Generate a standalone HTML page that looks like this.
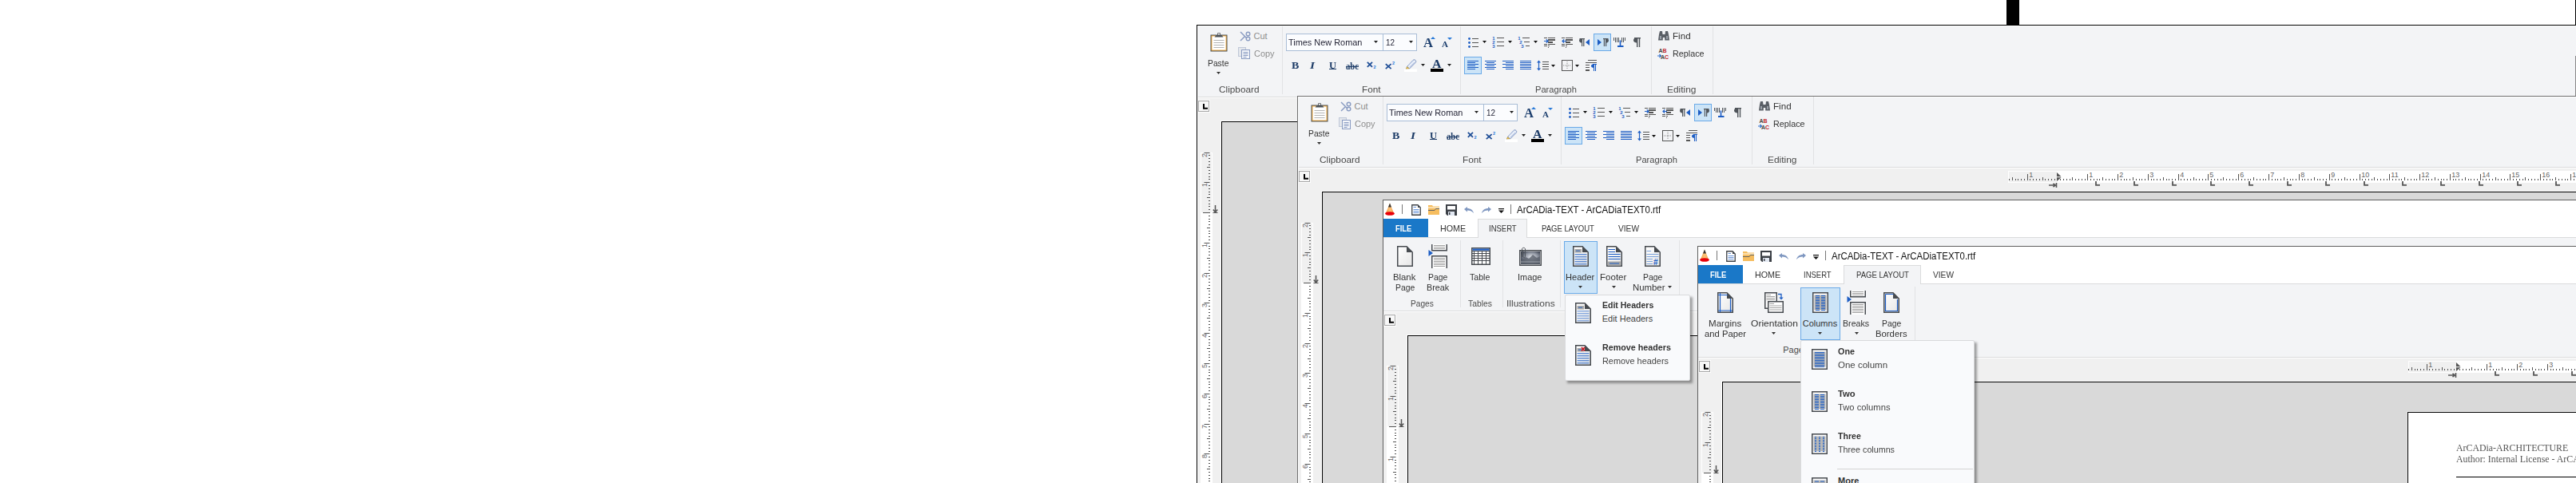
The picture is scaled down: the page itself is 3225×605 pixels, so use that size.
<!DOCTYPE html><html><head><meta charset="utf-8"><style>html,body{margin:0;padding:0;}body{width:3225px;height:605px;overflow:hidden;position:relative;background:#fff;font-family:"Liberation Sans",sans-serif;}.a{position:absolute;}.t{position:absolute;white-space:nowrap;line-height:normal;}</style></head><body>
<div class="a" style="left:2512px;top:0px;width:16px;height:31px;background:#000;"></div>
<div class="a" style="left:3224px;top:0px;width:1px;height:31px;background:#000;"></div>
<div class="a" style="left:1498px;top:31px;width:1727px;height:574px;background:#000;"></div>
<div class="a" style="left:1499px;top:32px;width:1726px;height:573px;background:#fff;"></div>
<div class="a" style="left:1500px;top:33px;width:1725px;height:88px;background:#f3f4f6;"></div>
<div class="a" style="left:1500px;top:121px;width:1725px;height:1px;background:#dadbdc;"></div>
<div class="a" style="left:1500px;top:122px;width:1725px;height:483px;background:#f0f0f0;"></div>
<div class="a" style="left:1500px;top:122px;width:1725px;height:1px;background:#fff;"></div>
<svg class="a" style="left:1515px;top:41px;" width="22" height="24" viewBox="0 0 22 24"><rect x="0.5" y="2.5" width="21" height="21" fill="#4d5257"/><rect x="1.5" y="3.5" width="19" height="19" fill="#f6b24a"/><rect x="2.5" y="4.5" width="17" height="17" fill="#fff"/><path d="M5.5 5.5H16.5L14.5 3H12.8V0.3H9.2V3H7.5Z" fill="#4d5257"/><rect x="10" y="1" width="2" height="1.5" fill="#fff"/><path d="M4.5 9.5H17.5M4.5 12.5H17.5M4.5 15.5H17.5M4.5 18.5H17.5" stroke="#b4b4b4" stroke-width="1"/></svg>
<div class="t" style="left:1512.40px;top:72.95px;font-size:11px;color:#333;font-family:'Liberation Sans', sans-serif;transform:scaleX(0.9376);transform-origin:0 0;">Paste</div>
<svg class="a" style="left:1523px;top:90px;" width="5" height="3" viewBox="0 0 5 3"><path d="M0 0H5L2.5 3Z" fill="#333"/></svg>
<svg class="a" style="left:1552px;top:39px;" width="14" height="13" viewBox="0 0 14 13"><path d="M1 1L9 9M1 12L7 6" stroke="#8a9cc2" stroke-width="1.5" fill="none"/><circle cx="10.5" cy="3.5" r="2.3" stroke="#8a9cc2" stroke-width="1.4" fill="none"/><circle cx="10.5" cy="9.5" r="2.3" stroke="#8a9cc2" stroke-width="1.4" fill="none"/></svg>
<div class="t" style="left:1569.50px;top:39.05px;font-size:11px;color:#8e8e8e;font-family:'Liberation Sans', sans-serif;">Cut</div>
<svg class="a" style="left:1550px;top:59px;" width="15" height="15" viewBox="0 0 15 15"><rect x="0.5" y="0.5" width="9" height="11" fill="#e4e7ec" stroke="#c0c8d8"/><rect x="4.5" y="3.5" width="10" height="11" fill="#f4f6fa" stroke="#8a9cc2"/><path d="M6.5 6.5H12.5M6.5 8.5H12.5M6.5 10.5H12.5M6.5 12.5H10.5" stroke="#8a9cc2"/></svg>
<div class="t" style="left:1569.50px;top:60.64px;font-size:11px;color:#8e8e8e;font-family:'Liberation Sans', sans-serif;transform:scaleX(0.9927);transform-origin:0 0;">Copy</div>
<div class="a" style="left:1605px;top:33px;width:1px;height:85px;background:#e1e2e4;"></div>
<div class="a" style="left:1828px;top:33px;width:1px;height:85px;background:#e1e2e4;"></div>
<div class="a" style="left:2067px;top:33px;width:1px;height:85px;background:#e1e2e4;"></div>
<div class="a" style="left:2144px;top:33px;width:1px;height:85px;background:#e1e2e4;"></div>
<div class="t" style="left:1526.25px;top:106.05px;font-size:11px;color:#4a4a4a;font-family:'Liberation Sans', sans-serif;transform:scaleX(1.0723);transform-origin:0 0;">Clipboard</div>
<div class="t" style="left:1704.70px;top:106.05px;font-size:11px;color:#4a4a4a;font-family:'Liberation Sans', sans-serif;transform:scaleX(1.0712);transform-origin:0 0;">Font</div>
<div class="t" style="left:1921.70px;top:106.05px;font-size:11px;color:#4a4a4a;font-family:'Liberation Sans', sans-serif;transform:scaleX(1.0116);transform-origin:0 0;">Paragraph</div>
<div class="t" style="left:2087.45px;top:106.05px;font-size:11px;color:#4a4a4a;font-family:'Liberation Sans', sans-serif;transform:scaleX(1.0845);transform-origin:0 0;">Editing</div>
<div class="a" style="left:1610px;top:42px;width:164px;height:22px;background:#fbfcfe;border:1px solid #a9bdd6;box-sizing:border-box;"></div>
<div class="a" style="left:1731px;top:42px;width:1px;height:22px;background:#a9bdd6;"></div>
<div class="t" style="left:1613.00px;top:47.25px;font-size:11px;color:#1e1e30;font-family:'Liberation Sans', sans-serif;transform:scaleX(0.9922);transform-origin:0 0;">Times New Roman</div>
<div class="t" style="left:1735.00px;top:47.25px;font-size:11px;color:#1e1e30;font-family:'Liberation Sans', sans-serif;transform:scaleX(0.8980);transform-origin:0 0;">12</div>
<svg class="a" style="left:1720px;top:51px;" width="5" height="3" viewBox="0 0 5 3"><path d="M0 0H5L2.5 3Z" fill="#222"/></svg>
<svg class="a" style="left:1763.5px;top:51px;" width="5" height="3" viewBox="0 0 5 3"><path d="M0 0H5L2.5 3Z" fill="#222"/></svg>
<div class="t" style="left:1782.00px;top:43.55px;font-size:17px;color:#1d3f6e;font-family:'Liberation Serif', serif;font-weight:bold;transform:scaleX(0.9771);transform-origin:0 0;">A</div>
<svg class="a" style="left:1791px;top:46px;" width="6" height="3" viewBox="0 0 6 3"><path d="M0 3L3 0L6 3Z" fill="#2a7ad8"/></svg>
<div class="t" style="left:1805.00px;top:48.90px;font-size:11px;color:#1d3f6e;font-family:'Liberation Serif', serif;font-weight:bold;transform:scaleX(1.0079);transform-origin:0 0;">A</div>
<svg class="a" style="left:1812px;top:47px;" width="6" height="3" viewBox="0 0 6 3"><path d="M0 0L3 3L6 0Z" fill="#2a7ad8"/></svg>
<div class="t" style="left:1617.00px;top:73.97px;font-size:13.5px;color:#1b3a66;font-family:'Liberation Serif', serif;font-weight:bold;transform:scaleX(1.0333);transform-origin:0 0;">B</div>
<div class="t" style="left:1640.00px;top:73.97px;font-size:13.5px;color:#1b3a66;font-family:'Liberation Serif', serif;font-weight:bold;transform:scaleX(1.1429);transform-origin:0 0;font-style:italic;">I</div>
<div class="t" style="left:1664.00px;top:73.97px;font-size:13.5px;color:#1b3a66;font-family:'Liberation Serif', serif;font-weight:bold;transform:scaleX(0.9231);transform-origin:0 0;">U</div>
<div class="a" style="left:1664px;top:86px;width:9px;height:1px;background:#1b3a66;"></div>
<div class="t" style="left:1685.00px;top:75.42px;font-size:13px;color:#1b3a66;font-family:'Liberation Serif', serif;font-weight:bold;transform:scaleX(0.8205);transform-origin:0 0;">abc</div>
<div class="a" style="left:1685px;top:83px;width:16px;height:1px;background:#1b3a66;"></div>
<svg class="a" style="left:1711px;top:77px;" width="13" height="9" viewBox="0 0 13 9"><path d="M0.8 0.8L7 6.8M7 0.8L0.8 6.8" stroke="#1f4e96" stroke-width="1.8"/><text x="8.6" y="8.8" font-size="5.5" font-weight="bold" fill="#2a7ad8" font-family="Liberation Sans">2</text></svg>
<svg class="a" style="left:1734px;top:77px;" width="13" height="10" viewBox="0 0 13 10"><path d="M0.8 3.2L7.6 9.2M7.6 3.2L0.8 9.2" stroke="#1f4e96" stroke-width="1.8"/><text x="9" y="4.2" font-size="5.5" font-weight="bold" fill="#2a7ad8" font-family="Liberation Sans">2</text></svg>
<svg class="a" style="left:1758px;top:74px;" width="16" height="16" viewBox="0 0 16 16"><path d="M3.5 9.5L11 1.5C12 0.5 13 0.5 14 1.5C15 2.5 15 3.5 14 4.5L6.5 12Z" fill="#e8eef8" stroke="#6b85b8" stroke-width="0.9"/><path d="M5 8L11 2M7 10L13 4" stroke="#a9bde0" stroke-width="0.8"/><path d="M3.5 9.5L6.5 12L2 12.5Z" fill="#f0c040" stroke="#8a7a50" stroke-width="0.5"/><rect x="0" y="12.5" width="16" height="3.5" fill="#fff"/></svg>
<svg class="a" style="left:1779px;top:80px;" width="5" height="3" viewBox="0 0 5 3"><path d="M0 0H5L2.5 3Z" fill="#222"/></svg>
<div class="t" style="left:1793.00px;top:71.64px;font-size:15px;color:#1b3a66;font-family:'Liberation Serif', serif;font-weight:bold;transform:scaleX(1.0620);transform-origin:0 0;">A</div>
<div class="a" style="left:1791px;top:86px;width:16px;height:4px;background:#000;"></div>
<svg class="a" style="left:1812px;top:80px;" width="5" height="3" viewBox="0 0 5 3"><path d="M0 0H5L2.5 3Z" fill="#222"/></svg>
<svg class="a" style="left:1838px;top:47px;" width="3" height="3" viewBox="0 0 3 3"><circle cx="1.5" cy="1.5" r="1.4" fill="#1e5ec4"/></svg>
<div class="a" style="left:1843px;top:48px;width:8px;height:1px;background:#555;"></div>
<svg class="a" style="left:1838px;top:52px;" width="3" height="3" viewBox="0 0 3 3"><circle cx="1.5" cy="1.5" r="1.4" fill="#1e5ec4"/></svg>
<div class="a" style="left:1843px;top:53px;width:8px;height:1px;background:#555;"></div>
<svg class="a" style="left:1838px;top:57px;" width="3" height="3" viewBox="0 0 3 3"><circle cx="1.5" cy="1.5" r="1.4" fill="#1e5ec4"/></svg>
<div class="a" style="left:1843px;top:58px;width:8px;height:1px;background:#555;"></div>
<svg class="a" style="left:1856px;top:51px;" width="5" height="3" viewBox="0 0 5 3"><path d="M0 0H5L2.5 3Z" fill="#111"/></svg>
<svg class="a" style="left:1868px;top:45px;" width="5" height="6" viewBox="0 0 5 6"><text x="0.3" y="5.3" font-size="6" font-weight="bold" fill="#1e5ec4" font-family="Liberation Sans">1</text></svg>
<div class="a" style="left:1874px;top:47px;width:9px;height:1px;background:#555;"></div>
<svg class="a" style="left:1868px;top:50px;" width="5" height="6" viewBox="0 0 5 6"><text x="0.3" y="5.3" font-size="6" font-weight="bold" fill="#1e5ec4" font-family="Liberation Sans">2</text></svg>
<div class="a" style="left:1874px;top:52px;width:9px;height:1px;background:#555;"></div>
<svg class="a" style="left:1868px;top:55px;" width="5" height="6" viewBox="0 0 5 6"><text x="0.3" y="5.3" font-size="6" font-weight="bold" fill="#1e5ec4" font-family="Liberation Sans">3</text></svg>
<div class="a" style="left:1874px;top:57px;width:9px;height:1px;background:#555;"></div>
<svg class="a" style="left:1888px;top:51px;" width="5" height="3" viewBox="0 0 5 3"><path d="M0 0H5L2.5 3Z" fill="#111"/></svg>
<svg class="a" style="left:1900px;top:45px;" width="5" height="6" viewBox="0 0 5 6"><text x="0.3" y="5.3" font-size="6" font-weight="bold" fill="#1e5ec4" font-family="Liberation Sans">1</text></svg>
<div class="a" style="left:1906px;top:47px;width:9px;height:1px;background:#555;"></div>
<svg class="a" style="left:1902px;top:50px;" width="5" height="6" viewBox="0 0 5 6"><text x="0.3" y="5.3" font-size="6" font-weight="bold" fill="#1e5ec4" font-family="Liberation Sans">2</text></svg>
<div class="a" style="left:1908px;top:52px;width:7px;height:1px;background:#555;"></div>
<svg class="a" style="left:1904px;top:55px;" width="5" height="6" viewBox="0 0 5 6"><text x="0.3" y="5.3" font-size="6" font-weight="bold" fill="#1e5ec4" font-family="Liberation Sans">3</text></svg>
<div class="a" style="left:1910px;top:57px;width:5px;height:1px;background:#555;"></div>
<svg class="a" style="left:1920px;top:51px;" width="5" height="3" viewBox="0 0 5 3"><path d="M0 0H5L2.5 3Z" fill="#111"/></svg>
<div class="a" style="left:1933px;top:47px;width:4px;height:1px;background:#555;"></div>
<div class="a" style="left:1938px;top:47px;width:9px;height:1px;background:#555;"></div>
<div class="a" style="left:1938px;top:49px;width:9px;height:2px;background:#555;"></div>
<div class="a" style="left:1938px;top:52px;width:6px;height:2px;background:#555;"></div>
<div class="a" style="left:1933px;top:55px;width:4px;height:1px;background:#555;"></div>
<div class="a" style="left:1938px;top:55px;width:9px;height:1px;background:#555;"></div>
<div class="a" style="left:1933px;top:57px;width:4px;height:1px;background:#555;"></div>
<div class="a" style="left:1938px;top:57px;width:2px;height:1px;background:#555;"></div>
<div class="a" style="left:1938px;top:59px;width:1px;height:1px;background:#555;"></div>
<svg class="a" style="left:1933px;top:49px;" width="6" height="5" viewBox="0 0 6 5"><path d="M0 2.5H5M2.8 0.3L5 2.5L2.8 4.7" stroke="#1e5ec4" stroke-width="1.2" fill="none"/></svg>
<div class="a" style="left:1955px;top:47px;width:4px;height:1px;background:#555;"></div>
<div class="a" style="left:1960px;top:47px;width:9px;height:1px;background:#555;"></div>
<div class="a" style="left:1960px;top:49px;width:9px;height:2px;background:#555;"></div>
<div class="a" style="left:1960px;top:52px;width:6px;height:2px;background:#555;"></div>
<div class="a" style="left:1955px;top:55px;width:4px;height:1px;background:#555;"></div>
<div class="a" style="left:1960px;top:55px;width:9px;height:1px;background:#555;"></div>
<div class="a" style="left:1955px;top:57px;width:4px;height:1px;background:#555;"></div>
<div class="a" style="left:1960px;top:57px;width:2px;height:1px;background:#555;"></div>
<div class="a" style="left:1960px;top:59px;width:1px;height:1px;background:#555;"></div>
<svg class="a" style="left:1955px;top:49px;" width="6" height="5" viewBox="0 0 6 5"><path d="M1 2.5H6M3.2 0.3L1 2.5L3.2 4.7" stroke="#1e5ec4" stroke-width="1.2" fill="none"/></svg>
<svg class="a" style="left:1977px;top:48px;" width="8" height="10" viewBox="0 0 8 10"><rect x="3" y="0" width="1.2" height="10" fill="#50555b"/><rect x="5.2" y="0" width="1.2" height="10" fill="#50555b"/><rect x="0.5" y="0" width="6.5" height="1.2" fill="#50555b"/><path d="M3.4 0.2H2.6C1 0.2 0 1.4 0 2.8C0 4.2 1 5.4 2.6 5.4H3.4Z" fill="#50555b"/></svg>
<svg class="a" style="left:1985px;top:49px;" width="5" height="8" viewBox="0 0 5 8"><path d="M5 0V8L0 4Z" fill="#1e5ec4"/></svg>
<div class="a" style="left:1995px;top:42px;width:22px;height:22px;background:#cce4f7;border:1px solid #6aaae8;box-sizing:border-box;"></div>
<svg class="a" style="left:2000px;top:49px;" width="5" height="8" viewBox="0 0 5 8"><path d="M0 0V8L5 4Z" fill="#1e5ec4"/></svg>
<svg class="a" style="left:2006px;top:48px;" width="8" height="10" viewBox="0 0 8 10"><rect x="1.8" y="0" width="1.2" height="10" fill="#50555b"/><rect x="4" y="0" width="1.2" height="10" fill="#50555b"/><rect x="1" y="0" width="6.5" height="1.2" fill="#50555b"/><path d="M4.6 0.2H5.4C7 0.2 8 1.4 8 2.8C8 4.2 7 5.4 5.4 5.4H4.6Z" fill="#50555b"/></svg>
<svg class="a" style="left:2020px;top:47px;" width="16" height="12" viewBox="0 0 16 12"><path d="M0.5 0V4M2.5 0V6M4.5 0V6M6.5 0V6M10.5 0V6M12.5 0V6M14.5 0V4" stroke="#50555b" stroke-width="1"/><rect x="7.7" y="3.5" width="1.6" height="7" fill="#1e5ec4"/><rect x="5" y="10" width="7.5" height="2" fill="#1e5ec4"/></svg>
<svg class="a" style="left:2045px;top:47px;" width="10" height="12" viewBox="0 0 10 12"><rect x="4" y="0" width="1.4" height="12" fill="#50555b"/><rect x="6.8" y="0" width="1.4" height="12" fill="#50555b"/><rect x="1" y="0" width="8" height="1.4" fill="#50555b"/><path d="M4.5 0.2H3.3C1.2 0.2 0 1.6 0 3.3C0 5 1.2 6.4 3.3 6.4H4.5Z" fill="#50555b"/></svg>
<div class="a" style="left:1833px;top:71px;width:22px;height:22px;background:#cce4f7;border:1px solid #6aaae8;box-sizing:border-box;"></div>
<div class="a" style="left:1837px;top:76px;width:14px;height:1px;background:#1e5ec4;"></div>
<div class="a" style="left:1837px;top:78px;width:10px;height:1px;background:#1e5ec4;"></div>
<div class="a" style="left:1837px;top:80px;width:14px;height:1px;background:#1e5ec4;"></div>
<div class="a" style="left:1837px;top:82px;width:10px;height:1px;background:#1e5ec4;"></div>
<div class="a" style="left:1837px;top:84px;width:14px;height:1px;background:#1e5ec4;"></div>
<div class="a" style="left:1837px;top:86px;width:10px;height:1px;background:#1e5ec4;"></div>
<div class="a" style="left:1859.0px;top:76px;width:14px;height:1px;background:#1e5ec4;"></div>
<div class="a" style="left:1861.0px;top:78px;width:10px;height:1px;background:#1e5ec4;"></div>
<div class="a" style="left:1859.0px;top:80px;width:14px;height:1px;background:#1e5ec4;"></div>
<div class="a" style="left:1861.0px;top:82px;width:10px;height:1px;background:#1e5ec4;"></div>
<div class="a" style="left:1859.0px;top:84px;width:14px;height:1px;background:#1e5ec4;"></div>
<div class="a" style="left:1861.0px;top:86px;width:10px;height:1px;background:#1e5ec4;"></div>
<div class="a" style="left:1881px;top:76px;width:14px;height:1px;background:#1e5ec4;"></div>
<div class="a" style="left:1885px;top:78px;width:10px;height:1px;background:#1e5ec4;"></div>
<div class="a" style="left:1881px;top:80px;width:14px;height:1px;background:#1e5ec4;"></div>
<div class="a" style="left:1885px;top:82px;width:10px;height:1px;background:#1e5ec4;"></div>
<div class="a" style="left:1881px;top:84px;width:14px;height:1px;background:#1e5ec4;"></div>
<div class="a" style="left:1885px;top:86px;width:10px;height:1px;background:#1e5ec4;"></div>
<div class="a" style="left:1903px;top:76px;width:14px;height:1px;background:#1e5ec4;"></div>
<div class="a" style="left:1903px;top:78px;width:14px;height:1px;background:#1e5ec4;"></div>
<div class="a" style="left:1903px;top:80px;width:14px;height:1px;background:#1e5ec4;"></div>
<div class="a" style="left:1903px;top:82px;width:14px;height:1px;background:#1e5ec4;"></div>
<div class="a" style="left:1903px;top:84px;width:14px;height:1px;background:#1e5ec4;"></div>
<div class="a" style="left:1903px;top:86px;width:14px;height:1px;background:#1e5ec4;"></div>
<svg class="a" style="left:1924px;top:75px;" width="15" height="14" viewBox="0 0 15 14"><path d="M2.5 0.5L0 3.5H5ZM2.5 13.5L0 10.5H5Z" fill="#1e5ec4"/><path d="M2.5 3V11" stroke="#1e5ec4" stroke-width="1.2"/><path d="M7 2.5H15M7 5.5H15M7 8.5H15M7 11.5H15" stroke="#555"/></svg>
<svg class="a" style="left:1942px;top:81px;" width="5" height="3" viewBox="0 0 5 3"><path d="M0 0H5L2.5 3Z" fill="#111"/></svg>
<svg class="a" style="left:1955px;top:75px;" width="14" height="14" viewBox="0 0 14 14"><rect x="0.5" y="0.5" width="13" height="13" fill="none" stroke="#555"/><path d="M7 2V12M2 7H12" stroke="#888" stroke-dasharray="1 1"/></svg>
<svg class="a" style="left:1972px;top:81px;" width="5" height="3" viewBox="0 0 5 3"><path d="M0 0H5L2.5 3Z" fill="#111"/></svg>
<svg class="a" style="left:1985px;top:75px;" width="14" height="14" viewBox="0 0 14 14"><path d="M3 0.5H14M0 3.5H14M0 6.5H5M0 9.5H5M0 12.5H5" stroke="#555"/><rect x="0" y="12" width="5" height="2" fill="#555"/><path d="M9 5.5H14M10.5 5V14M12.5 5V14" stroke="#1e5ec4" stroke-width="1.1" fill="none"/><path d="M10.5 5.5H9.2C7.8 5.5 7 6.5 7 7.6C7 8.7 7.8 9.7 9.2 9.7H10.5Z" fill="#1e5ec4"/></svg>
<svg class="a" style="left:2076px;top:39px;" width="14" height="12" viewBox="0 0 14 12"><path d="M1 4L2 0H5L5.5 4H8.5L9 0H12L13 4L14 11.5H8.2V8H5.8V11.5H0Z" fill="#5a5f66"/><rect x="2" y="6" width="2" height="4" fill="#9aa0a8"/><rect x="10" y="6" width="2" height="4" fill="#9aa0a8"/></svg>
<div class="t" style="left:2094.40px;top:39.45px;font-size:11px;color:#333;font-family:'Liberation Sans', sans-serif;transform:scaleX(1.0558);transform-origin:0 0;">Find</div>
<svg class="a" style="left:2075px;top:60px;" width="15" height="14" viewBox="0 0 15 14"><text x="1.5" y="6.2" font-size="7" fill="#444" font-family="Liberation Sans" font-weight="bold">A</text><text x="6.5" y="6.2" font-size="7" fill="#c0272d" font-family="Liberation Sans" font-weight="bold">B</text><text x="4" y="14" font-size="7" fill="#444" font-family="Liberation Sans" font-weight="bold">A</text><text x="9" y="14" font-size="7" fill="#c0272d" font-family="Liberation Sans" font-weight="bold">C</text><path d="M0 10H4M2.5 8L4.5 10L2.5 12" stroke="#2a6acb" fill="none" stroke-width="1.1"/></svg>
<div class="t" style="left:2094.40px;top:60.75px;font-size:11px;color:#333;font-family:'Liberation Sans', sans-serif;transform:scaleX(0.9808);transform-origin:0 0;">Replace</div>
<div class="a" style="left:1499px;top:125px;width:16px;height:16px;background:#fff;"></div>
<div class="a" style="left:1500px;top:126px;width:14px;height:14px;background:#f8f8f8;border:1px solid #a6a6a6;box-sizing:border-box;"></div>
<svg class="a" style="left:1506px;top:130px;" width="6" height="7" viewBox="0 0 6 7"><path d="M1 0V5.8H6" stroke="#000" stroke-width="2" fill="none"/></svg>
<div class="a" style="left:1503px;top:191px;width:15px;height:75px;background:#f0f0f0;border:1px solid #fff;border-bottom:none;box-sizing:border-box;"></div>
<div class="a" style="left:1503px;top:266px;width:15px;height:339px;background:#fff;"></div>
<svg class="a" style="left:1503px;top:191px;" width="16" height="415" viewBox="0 0 16 415"><path d="M10 71.5H12M10 67.5H12M10 64.5H12M10 60.5H12M8 56.5H12M10 52.5H12M10 49.5H12M10 45.5H12M10 41.5H12M4.5 37.5H11.5M10 33.5H12M10 30.5H12M10 26.5H12M10 22.5H12M8 18.5H12M10 15.5H12M10 11.5H12M10 7.5H12M10 3.5H12M4.5 0.5H11.5M3 75.5H12M10 79.5H12M10 83.5H12M10 86.5H12M10 90.5H12M8 94.5H12M10 98.5H12M10 101.5H12M10 105.5H12M10 109.5H12M4.5 113.5H11.5M10 117.5H12M10 120.5H12M10 124.5H12M10 128.5H12M8 132.5H12M10 135.5H12M10 139.5H12M10 143.5H12M10 147.5H12M4.5 151.5H11.5M10 154.5H12M10 158.5H12M10 162.5H12M10 166.5H12M8 170.5H12M10 173.5H12M10 177.5H12M10 181.5H12M10 185.5H12M4.5 188.5H11.5M10 192.5H12M10 196.5H12M10 200.5H12M10 204.5H12M8 207.5H12M10 211.5H12M10 215.5H12M10 219.5H12M10 222.5H12M4.5 226.5H11.5M10 230.5H12M10 234.5H12M10 238.5H12M10 241.5H12M8 245.5H12M10 249.5H12M10 253.5H12M10 256.5H12M10 260.5H12M4.5 264.5H11.5M10 268.5H12M10 272.5H12M10 275.5H12M10 279.5H12M8 283.5H12M10 287.5H12M10 290.5H12M10 294.5H12M10 298.5H12M4.5 302.5H11.5M10 306.5H12M10 309.5H12M10 313.5H12M10 317.5H12M8 321.5H12M10 324.5H12M10 328.5H12M10 332.5H12M10 336.5H12M4.5 340.5H11.5M10 343.5H12M10 347.5H12M10 351.5H12M10 355.5H12M8 358.5H12M10 362.5H12M10 366.5H12M10 370.5H12M10 374.5H12M4.5 377.5H11.5M10 381.5H12M10 385.5H12M10 389.5H12M10 393.5H12M8 396.5H12M10 400.5H12M10 404.5H12M10 408.5H12M10 411.5H12M4.5 415.5H11.5M10 419.5H12" stroke="#555" stroke-width="1"/><text transform="translate(8,43.0) rotate(-90)" font-size="9" fill="#666" font-family="Liberation Sans">1</text><text transform="translate(8,6.0) rotate(-90)" font-size="9" fill="#666" font-family="Liberation Sans">2</text><text transform="translate(8,119.0) rotate(-90)" font-size="9" fill="#666" font-family="Liberation Sans">1</text><text transform="translate(8,157.0) rotate(-90)" font-size="9" fill="#666" font-family="Liberation Sans">2</text><text transform="translate(8,194.0) rotate(-90)" font-size="9" fill="#666" font-family="Liberation Sans">3</text><text transform="translate(8,232.0) rotate(-90)" font-size="9" fill="#666" font-family="Liberation Sans">4</text><text transform="translate(8,270.0) rotate(-90)" font-size="9" fill="#666" font-family="Liberation Sans">5</text><text transform="translate(8,308.0) rotate(-90)" font-size="9" fill="#666" font-family="Liberation Sans">6</text><text transform="translate(8,346.0) rotate(-90)" font-size="9" fill="#666" font-family="Liberation Sans">7</text><text transform="translate(8,383.0) rotate(-90)" font-size="9" fill="#666" font-family="Liberation Sans">8</text><text transform="translate(8,421.0) rotate(-90)" font-size="9" fill="#666" font-family="Liberation Sans">9</text></svg>
<svg class="a" style="left:1518px;top:257px;" width="7" height="10" viewBox="0 0 7 10"><path d="M3.5 0V9M0.8 5.5L3.5 9L6.2 5.5" stroke="#555" stroke-width="1.5" fill="none"/><path d="M0.5 9.5H6.5" stroke="#555" stroke-width="1"/></svg>
<div class="a" style="left:1528px;top:151px;width:1697px;height:454px;background:#fff;"></div>
<div class="a" style="left:1529px;top:152px;width:1696px;height:453px;background:#d9d9d9;border-left:1px solid #000;border-top:1px solid #000;box-sizing:border-box;"></div>
<div class="a" style="left:3224px;top:70px;width:1px;height:50px;background:#888;"></div>
<div class="a" style="left:1624px;top:120px;width:1601px;height:485px;background:#6e6e6e;"></div>
<div class="a" style="left:1625px;top:121px;width:1600px;height:484px;background:#fff;"></div>
<div class="a" style="left:1626px;top:122px;width:1599px;height:87px;background:#f3f4f6;"></div>
<div class="a" style="left:1626px;top:209px;width:1599px;height:1px;background:#dadbdc;"></div>
<div class="a" style="left:1626px;top:210px;width:1599px;height:395px;background:#f0f0f0;"></div>
<div class="a" style="left:1626px;top:210px;width:1599px;height:1px;background:#fff;"></div>
<svg class="a" style="left:1641px;top:129px;" width="22" height="24" viewBox="0 0 22 24"><rect x="0.5" y="2.5" width="21" height="21" fill="#4d5257"/><rect x="1.5" y="3.5" width="19" height="19" fill="#f6b24a"/><rect x="2.5" y="4.5" width="17" height="17" fill="#fff"/><path d="M5.5 5.5H16.5L14.5 3H12.8V0.3H9.2V3H7.5Z" fill="#4d5257"/><rect x="10" y="1" width="2" height="1.5" fill="#fff"/><path d="M4.5 9.5H17.5M4.5 12.5H17.5M4.5 15.5H17.5M4.5 18.5H17.5" stroke="#b4b4b4" stroke-width="1"/></svg>
<div class="t" style="left:1638.40px;top:160.94px;font-size:11px;color:#333;font-family:'Liberation Sans', sans-serif;transform:scaleX(0.9376);transform-origin:0 0;">Paste</div>
<svg class="a" style="left:1649px;top:178px;" width="5" height="3" viewBox="0 0 5 3"><path d="M0 0H5L2.5 3Z" fill="#333"/></svg>
<svg class="a" style="left:1678px;top:127px;" width="14" height="13" viewBox="0 0 14 13"><path d="M1 1L9 9M1 12L7 6" stroke="#8a9cc2" stroke-width="1.5" fill="none"/><circle cx="10.5" cy="3.5" r="2.3" stroke="#8a9cc2" stroke-width="1.4" fill="none"/><circle cx="10.5" cy="9.5" r="2.3" stroke="#8a9cc2" stroke-width="1.4" fill="none"/></svg>
<div class="t" style="left:1695.50px;top:127.05px;font-size:11px;color:#8e8e8e;font-family:'Liberation Sans', sans-serif;">Cut</div>
<svg class="a" style="left:1676px;top:147px;" width="15" height="15" viewBox="0 0 15 15"><rect x="0.5" y="0.5" width="9" height="11" fill="#e4e7ec" stroke="#c0c8d8"/><rect x="4.5" y="3.5" width="10" height="11" fill="#f4f6fa" stroke="#8a9cc2"/><path d="M6.5 6.5H12.5M6.5 8.5H12.5M6.5 10.5H12.5M6.5 12.5H10.5" stroke="#8a9cc2"/></svg>
<div class="t" style="left:1695.50px;top:148.64px;font-size:11px;color:#8e8e8e;font-family:'Liberation Sans', sans-serif;transform:scaleX(0.9927);transform-origin:0 0;">Copy</div>
<div class="a" style="left:1731px;top:121px;width:1px;height:85px;background:#e1e2e4;"></div>
<div class="a" style="left:1954px;top:121px;width:1px;height:85px;background:#e1e2e4;"></div>
<div class="a" style="left:2193px;top:121px;width:1px;height:85px;background:#e1e2e4;"></div>
<div class="a" style="left:2270px;top:121px;width:1px;height:85px;background:#e1e2e4;"></div>
<div class="t" style="left:1652.25px;top:194.04px;font-size:11px;color:#4a4a4a;font-family:'Liberation Sans', sans-serif;transform:scaleX(1.0723);transform-origin:0 0;">Clipboard</div>
<div class="t" style="left:1830.70px;top:194.04px;font-size:11px;color:#4a4a4a;font-family:'Liberation Sans', sans-serif;transform:scaleX(1.0712);transform-origin:0 0;">Font</div>
<div class="t" style="left:2047.70px;top:194.04px;font-size:11px;color:#4a4a4a;font-family:'Liberation Sans', sans-serif;transform:scaleX(1.0116);transform-origin:0 0;">Paragraph</div>
<div class="t" style="left:2213.45px;top:194.04px;font-size:11px;color:#4a4a4a;font-family:'Liberation Sans', sans-serif;transform:scaleX(1.0845);transform-origin:0 0;">Editing</div>
<div class="a" style="left:1736px;top:130px;width:164px;height:22px;background:#fbfcfe;border:1px solid #a9bdd6;box-sizing:border-box;"></div>
<div class="a" style="left:1857px;top:130px;width:1px;height:22px;background:#a9bdd6;"></div>
<div class="t" style="left:1739.00px;top:135.24px;font-size:11px;color:#1e1e30;font-family:'Liberation Sans', sans-serif;transform:scaleX(0.9922);transform-origin:0 0;">Times New Roman</div>
<div class="t" style="left:1861.00px;top:135.24px;font-size:11px;color:#1e1e30;font-family:'Liberation Sans', sans-serif;transform:scaleX(0.8980);transform-origin:0 0;">12</div>
<svg class="a" style="left:1846px;top:139px;" width="5" height="3" viewBox="0 0 5 3"><path d="M0 0H5L2.5 3Z" fill="#222"/></svg>
<svg class="a" style="left:1889.5px;top:139px;" width="5" height="3" viewBox="0 0 5 3"><path d="M0 0H5L2.5 3Z" fill="#222"/></svg>
<div class="t" style="left:1908.00px;top:131.55px;font-size:17px;color:#1d3f6e;font-family:'Liberation Serif', serif;font-weight:bold;transform:scaleX(0.9771);transform-origin:0 0;">A</div>
<svg class="a" style="left:1917px;top:134px;" width="6" height="3" viewBox="0 0 6 3"><path d="M0 3L3 0L6 3Z" fill="#2a7ad8"/></svg>
<div class="t" style="left:1931.00px;top:136.90px;font-size:11px;color:#1d3f6e;font-family:'Liberation Serif', serif;font-weight:bold;transform:scaleX(1.0079);transform-origin:0 0;">A</div>
<svg class="a" style="left:1938px;top:135px;" width="6" height="3" viewBox="0 0 6 3"><path d="M0 0L3 3L6 0Z" fill="#2a7ad8"/></svg>
<div class="t" style="left:1743.00px;top:161.97px;font-size:13.5px;color:#1b3a66;font-family:'Liberation Serif', serif;font-weight:bold;transform:scaleX(1.0333);transform-origin:0 0;">B</div>
<div class="t" style="left:1766.00px;top:161.97px;font-size:13.5px;color:#1b3a66;font-family:'Liberation Serif', serif;font-weight:bold;transform:scaleX(1.1429);transform-origin:0 0;font-style:italic;">I</div>
<div class="t" style="left:1790.00px;top:161.97px;font-size:13.5px;color:#1b3a66;font-family:'Liberation Serif', serif;font-weight:bold;transform:scaleX(0.9231);transform-origin:0 0;">U</div>
<div class="a" style="left:1790px;top:174px;width:9px;height:1px;background:#1b3a66;"></div>
<div class="t" style="left:1811.00px;top:163.42px;font-size:13px;color:#1b3a66;font-family:'Liberation Serif', serif;font-weight:bold;transform:scaleX(0.8205);transform-origin:0 0;">abc</div>
<div class="a" style="left:1811px;top:171px;width:16px;height:1px;background:#1b3a66;"></div>
<svg class="a" style="left:1837px;top:165px;" width="13" height="9" viewBox="0 0 13 9"><path d="M0.8 0.8L7 6.8M7 0.8L0.8 6.8" stroke="#1f4e96" stroke-width="1.8"/><text x="8.6" y="8.8" font-size="5.5" font-weight="bold" fill="#2a7ad8" font-family="Liberation Sans">2</text></svg>
<svg class="a" style="left:1860px;top:165px;" width="13" height="10" viewBox="0 0 13 10"><path d="M0.8 3.2L7.6 9.2M7.6 3.2L0.8 9.2" stroke="#1f4e96" stroke-width="1.8"/><text x="9" y="4.2" font-size="5.5" font-weight="bold" fill="#2a7ad8" font-family="Liberation Sans">2</text></svg>
<svg class="a" style="left:1884px;top:162px;" width="16" height="16" viewBox="0 0 16 16"><path d="M3.5 9.5L11 1.5C12 0.5 13 0.5 14 1.5C15 2.5 15 3.5 14 4.5L6.5 12Z" fill="#e8eef8" stroke="#6b85b8" stroke-width="0.9"/><path d="M5 8L11 2M7 10L13 4" stroke="#a9bde0" stroke-width="0.8"/><path d="M3.5 9.5L6.5 12L2 12.5Z" fill="#f0c040" stroke="#8a7a50" stroke-width="0.5"/><rect x="0" y="12.5" width="16" height="3.5" fill="#fff"/></svg>
<svg class="a" style="left:1905px;top:168px;" width="5" height="3" viewBox="0 0 5 3"><path d="M0 0H5L2.5 3Z" fill="#222"/></svg>
<div class="t" style="left:1919.00px;top:159.63px;font-size:15px;color:#1b3a66;font-family:'Liberation Serif', serif;font-weight:bold;transform:scaleX(1.0620);transform-origin:0 0;">A</div>
<div class="a" style="left:1917px;top:174px;width:16px;height:4px;background:#000;"></div>
<svg class="a" style="left:1938px;top:168px;" width="5" height="3" viewBox="0 0 5 3"><path d="M0 0H5L2.5 3Z" fill="#222"/></svg>
<svg class="a" style="left:1964px;top:135px;" width="3" height="3" viewBox="0 0 3 3"><circle cx="1.5" cy="1.5" r="1.4" fill="#1e5ec4"/></svg>
<div class="a" style="left:1969px;top:136px;width:8px;height:1px;background:#555;"></div>
<svg class="a" style="left:1964px;top:140px;" width="3" height="3" viewBox="0 0 3 3"><circle cx="1.5" cy="1.5" r="1.4" fill="#1e5ec4"/></svg>
<div class="a" style="left:1969px;top:141px;width:8px;height:1px;background:#555;"></div>
<svg class="a" style="left:1964px;top:145px;" width="3" height="3" viewBox="0 0 3 3"><circle cx="1.5" cy="1.5" r="1.4" fill="#1e5ec4"/></svg>
<div class="a" style="left:1969px;top:146px;width:8px;height:1px;background:#555;"></div>
<svg class="a" style="left:1982px;top:139px;" width="5" height="3" viewBox="0 0 5 3"><path d="M0 0H5L2.5 3Z" fill="#111"/></svg>
<svg class="a" style="left:1994px;top:133px;" width="5" height="6" viewBox="0 0 5 6"><text x="0.3" y="5.3" font-size="6" font-weight="bold" fill="#1e5ec4" font-family="Liberation Sans">1</text></svg>
<div class="a" style="left:2000px;top:135px;width:9px;height:1px;background:#555;"></div>
<svg class="a" style="left:1994px;top:138px;" width="5" height="6" viewBox="0 0 5 6"><text x="0.3" y="5.3" font-size="6" font-weight="bold" fill="#1e5ec4" font-family="Liberation Sans">2</text></svg>
<div class="a" style="left:2000px;top:140px;width:9px;height:1px;background:#555;"></div>
<svg class="a" style="left:1994px;top:143px;" width="5" height="6" viewBox="0 0 5 6"><text x="0.3" y="5.3" font-size="6" font-weight="bold" fill="#1e5ec4" font-family="Liberation Sans">3</text></svg>
<div class="a" style="left:2000px;top:145px;width:9px;height:1px;background:#555;"></div>
<svg class="a" style="left:2014px;top:139px;" width="5" height="3" viewBox="0 0 5 3"><path d="M0 0H5L2.5 3Z" fill="#111"/></svg>
<svg class="a" style="left:2026px;top:133px;" width="5" height="6" viewBox="0 0 5 6"><text x="0.3" y="5.3" font-size="6" font-weight="bold" fill="#1e5ec4" font-family="Liberation Sans">1</text></svg>
<div class="a" style="left:2032px;top:135px;width:9px;height:1px;background:#555;"></div>
<svg class="a" style="left:2028px;top:138px;" width="5" height="6" viewBox="0 0 5 6"><text x="0.3" y="5.3" font-size="6" font-weight="bold" fill="#1e5ec4" font-family="Liberation Sans">2</text></svg>
<div class="a" style="left:2034px;top:140px;width:7px;height:1px;background:#555;"></div>
<svg class="a" style="left:2030px;top:143px;" width="5" height="6" viewBox="0 0 5 6"><text x="0.3" y="5.3" font-size="6" font-weight="bold" fill="#1e5ec4" font-family="Liberation Sans">3</text></svg>
<div class="a" style="left:2036px;top:145px;width:5px;height:1px;background:#555;"></div>
<svg class="a" style="left:2046px;top:139px;" width="5" height="3" viewBox="0 0 5 3"><path d="M0 0H5L2.5 3Z" fill="#111"/></svg>
<div class="a" style="left:2059px;top:135px;width:4px;height:1px;background:#555;"></div>
<div class="a" style="left:2064px;top:135px;width:9px;height:1px;background:#555;"></div>
<div class="a" style="left:2064px;top:137px;width:9px;height:2px;background:#555;"></div>
<div class="a" style="left:2064px;top:140px;width:6px;height:2px;background:#555;"></div>
<div class="a" style="left:2059px;top:143px;width:4px;height:1px;background:#555;"></div>
<div class="a" style="left:2064px;top:143px;width:9px;height:1px;background:#555;"></div>
<div class="a" style="left:2059px;top:145px;width:4px;height:1px;background:#555;"></div>
<div class="a" style="left:2064px;top:145px;width:2px;height:1px;background:#555;"></div>
<div class="a" style="left:2064px;top:147px;width:1px;height:1px;background:#555;"></div>
<svg class="a" style="left:2059px;top:137px;" width="6" height="5" viewBox="0 0 6 5"><path d="M0 2.5H5M2.8 0.3L5 2.5L2.8 4.7" stroke="#1e5ec4" stroke-width="1.2" fill="none"/></svg>
<div class="a" style="left:2081px;top:135px;width:4px;height:1px;background:#555;"></div>
<div class="a" style="left:2086px;top:135px;width:9px;height:1px;background:#555;"></div>
<div class="a" style="left:2086px;top:137px;width:9px;height:2px;background:#555;"></div>
<div class="a" style="left:2086px;top:140px;width:6px;height:2px;background:#555;"></div>
<div class="a" style="left:2081px;top:143px;width:4px;height:1px;background:#555;"></div>
<div class="a" style="left:2086px;top:143px;width:9px;height:1px;background:#555;"></div>
<div class="a" style="left:2081px;top:145px;width:4px;height:1px;background:#555;"></div>
<div class="a" style="left:2086px;top:145px;width:2px;height:1px;background:#555;"></div>
<div class="a" style="left:2086px;top:147px;width:1px;height:1px;background:#555;"></div>
<svg class="a" style="left:2081px;top:137px;" width="6" height="5" viewBox="0 0 6 5"><path d="M1 2.5H6M3.2 0.3L1 2.5L3.2 4.7" stroke="#1e5ec4" stroke-width="1.2" fill="none"/></svg>
<svg class="a" style="left:2103px;top:136px;" width="8" height="10" viewBox="0 0 8 10"><rect x="3" y="0" width="1.2" height="10" fill="#50555b"/><rect x="5.2" y="0" width="1.2" height="10" fill="#50555b"/><rect x="0.5" y="0" width="6.5" height="1.2" fill="#50555b"/><path d="M3.4 0.2H2.6C1 0.2 0 1.4 0 2.8C0 4.2 1 5.4 2.6 5.4H3.4Z" fill="#50555b"/></svg>
<svg class="a" style="left:2111px;top:137px;" width="5" height="8" viewBox="0 0 5 8"><path d="M5 0V8L0 4Z" fill="#1e5ec4"/></svg>
<div class="a" style="left:2121px;top:130px;width:22px;height:22px;background:#cce4f7;border:1px solid #6aaae8;box-sizing:border-box;"></div>
<svg class="a" style="left:2126px;top:137px;" width="5" height="8" viewBox="0 0 5 8"><path d="M0 0V8L5 4Z" fill="#1e5ec4"/></svg>
<svg class="a" style="left:2132px;top:136px;" width="8" height="10" viewBox="0 0 8 10"><rect x="1.8" y="0" width="1.2" height="10" fill="#50555b"/><rect x="4" y="0" width="1.2" height="10" fill="#50555b"/><rect x="1" y="0" width="6.5" height="1.2" fill="#50555b"/><path d="M4.6 0.2H5.4C7 0.2 8 1.4 8 2.8C8 4.2 7 5.4 5.4 5.4H4.6Z" fill="#50555b"/></svg>
<svg class="a" style="left:2146px;top:135px;" width="16" height="12" viewBox="0 0 16 12"><path d="M0.5 0V4M2.5 0V6M4.5 0V6M6.5 0V6M10.5 0V6M12.5 0V6M14.5 0V4" stroke="#50555b" stroke-width="1"/><rect x="7.7" y="3.5" width="1.6" height="7" fill="#1e5ec4"/><rect x="5" y="10" width="7.5" height="2" fill="#1e5ec4"/></svg>
<svg class="a" style="left:2171px;top:135px;" width="10" height="12" viewBox="0 0 10 12"><rect x="4" y="0" width="1.4" height="12" fill="#50555b"/><rect x="6.8" y="0" width="1.4" height="12" fill="#50555b"/><rect x="1" y="0" width="8" height="1.4" fill="#50555b"/><path d="M4.5 0.2H3.3C1.2 0.2 0 1.6 0 3.3C0 5 1.2 6.4 3.3 6.4H4.5Z" fill="#50555b"/></svg>
<div class="a" style="left:1959px;top:159px;width:22px;height:22px;background:#cce4f7;border:1px solid #6aaae8;box-sizing:border-box;"></div>
<div class="a" style="left:1963px;top:164px;width:14px;height:1px;background:#1e5ec4;"></div>
<div class="a" style="left:1963px;top:166px;width:10px;height:1px;background:#1e5ec4;"></div>
<div class="a" style="left:1963px;top:168px;width:14px;height:1px;background:#1e5ec4;"></div>
<div class="a" style="left:1963px;top:170px;width:10px;height:1px;background:#1e5ec4;"></div>
<div class="a" style="left:1963px;top:172px;width:14px;height:1px;background:#1e5ec4;"></div>
<div class="a" style="left:1963px;top:174px;width:10px;height:1px;background:#1e5ec4;"></div>
<div class="a" style="left:1985.0px;top:164px;width:14px;height:1px;background:#1e5ec4;"></div>
<div class="a" style="left:1987.0px;top:166px;width:10px;height:1px;background:#1e5ec4;"></div>
<div class="a" style="left:1985.0px;top:168px;width:14px;height:1px;background:#1e5ec4;"></div>
<div class="a" style="left:1987.0px;top:170px;width:10px;height:1px;background:#1e5ec4;"></div>
<div class="a" style="left:1985.0px;top:172px;width:14px;height:1px;background:#1e5ec4;"></div>
<div class="a" style="left:1987.0px;top:174px;width:10px;height:1px;background:#1e5ec4;"></div>
<div class="a" style="left:2007px;top:164px;width:14px;height:1px;background:#1e5ec4;"></div>
<div class="a" style="left:2011px;top:166px;width:10px;height:1px;background:#1e5ec4;"></div>
<div class="a" style="left:2007px;top:168px;width:14px;height:1px;background:#1e5ec4;"></div>
<div class="a" style="left:2011px;top:170px;width:10px;height:1px;background:#1e5ec4;"></div>
<div class="a" style="left:2007px;top:172px;width:14px;height:1px;background:#1e5ec4;"></div>
<div class="a" style="left:2011px;top:174px;width:10px;height:1px;background:#1e5ec4;"></div>
<div class="a" style="left:2029px;top:164px;width:14px;height:1px;background:#1e5ec4;"></div>
<div class="a" style="left:2029px;top:166px;width:14px;height:1px;background:#1e5ec4;"></div>
<div class="a" style="left:2029px;top:168px;width:14px;height:1px;background:#1e5ec4;"></div>
<div class="a" style="left:2029px;top:170px;width:14px;height:1px;background:#1e5ec4;"></div>
<div class="a" style="left:2029px;top:172px;width:14px;height:1px;background:#1e5ec4;"></div>
<div class="a" style="left:2029px;top:174px;width:14px;height:1px;background:#1e5ec4;"></div>
<svg class="a" style="left:2050px;top:163px;" width="15" height="14" viewBox="0 0 15 14"><path d="M2.5 0.5L0 3.5H5ZM2.5 13.5L0 10.5H5Z" fill="#1e5ec4"/><path d="M2.5 3V11" stroke="#1e5ec4" stroke-width="1.2"/><path d="M7 2.5H15M7 5.5H15M7 8.5H15M7 11.5H15" stroke="#555"/></svg>
<svg class="a" style="left:2068px;top:169px;" width="5" height="3" viewBox="0 0 5 3"><path d="M0 0H5L2.5 3Z" fill="#111"/></svg>
<svg class="a" style="left:2081px;top:163px;" width="14" height="14" viewBox="0 0 14 14"><rect x="0.5" y="0.5" width="13" height="13" fill="none" stroke="#555"/><path d="M7 2V12M2 7H12" stroke="#888" stroke-dasharray="1 1"/></svg>
<svg class="a" style="left:2098px;top:169px;" width="5" height="3" viewBox="0 0 5 3"><path d="M0 0H5L2.5 3Z" fill="#111"/></svg>
<svg class="a" style="left:2111px;top:163px;" width="14" height="14" viewBox="0 0 14 14"><path d="M3 0.5H14M0 3.5H14M0 6.5H5M0 9.5H5M0 12.5H5" stroke="#555"/><rect x="0" y="12" width="5" height="2" fill="#555"/><path d="M9 5.5H14M10.5 5V14M12.5 5V14" stroke="#1e5ec4" stroke-width="1.1" fill="none"/><path d="M10.5 5.5H9.2C7.8 5.5 7 6.5 7 7.6C7 8.7 7.8 9.7 9.2 9.7H10.5Z" fill="#1e5ec4"/></svg>
<svg class="a" style="left:2202px;top:127px;" width="14" height="12" viewBox="0 0 14 12"><path d="M1 4L2 0H5L5.5 4H8.5L9 0H12L13 4L14 11.5H8.2V8H5.8V11.5H0Z" fill="#5a5f66"/><rect x="2" y="6" width="2" height="4" fill="#9aa0a8"/><rect x="10" y="6" width="2" height="4" fill="#9aa0a8"/></svg>
<div class="t" style="left:2220.40px;top:127.45px;font-size:11px;color:#333;font-family:'Liberation Sans', sans-serif;transform:scaleX(1.0558);transform-origin:0 0;">Find</div>
<svg class="a" style="left:2201px;top:148px;" width="15" height="14" viewBox="0 0 15 14"><text x="1.5" y="6.2" font-size="7" fill="#444" font-family="Liberation Sans" font-weight="bold">A</text><text x="6.5" y="6.2" font-size="7" fill="#c0272d" font-family="Liberation Sans" font-weight="bold">B</text><text x="4" y="14" font-size="7" fill="#444" font-family="Liberation Sans" font-weight="bold">A</text><text x="9" y="14" font-size="7" fill="#c0272d" font-family="Liberation Sans" font-weight="bold">C</text><path d="M0 10H4M2.5 8L4.5 10L2.5 12" stroke="#2a6acb" fill="none" stroke-width="1.1"/></svg>
<div class="t" style="left:2220.40px;top:148.74px;font-size:11px;color:#333;font-family:'Liberation Sans', sans-serif;transform:scaleX(0.9808);transform-origin:0 0;">Replace</div>
<div class="a" style="left:1625px;top:213px;width:16px;height:16px;background:#fff;"></div>
<div class="a" style="left:1626px;top:214px;width:14px;height:14px;background:#f8f8f8;border:1px solid #a6a6a6;box-sizing:border-box;"></div>
<svg class="a" style="left:1632px;top:218px;" width="6" height="7" viewBox="0 0 6 7"><path d="M1 0V5.8H6" stroke="#000" stroke-width="2" fill="none"/></svg>
<div class="a" style="left:1629px;top:279px;width:15px;height:75px;background:#f0f0f0;border:1px solid #fff;border-bottom:none;box-sizing:border-box;"></div>
<div class="a" style="left:1629px;top:354px;width:15px;height:251px;background:#fff;"></div>
<svg class="a" style="left:1629px;top:279px;" width="16" height="327" viewBox="0 0 16 327"><path d="M10 71.5H12M10 67.5H12M10 64.5H12M10 60.5H12M8 56.5H12M10 52.5H12M10 49.5H12M10 45.5H12M10 41.5H12M4.5 37.5H11.5M10 33.5H12M10 30.5H12M10 26.5H12M10 22.5H12M8 18.5H12M10 15.5H12M10 11.5H12M10 7.5H12M10 3.5H12M4.5 0.5H11.5M3 75.5H12M10 79.5H12M10 83.5H12M10 86.5H12M10 90.5H12M8 94.5H12M10 98.5H12M10 101.5H12M10 105.5H12M10 109.5H12M4.5 113.5H11.5M10 117.5H12M10 120.5H12M10 124.5H12M10 128.5H12M8 132.5H12M10 135.5H12M10 139.5H12M10 143.5H12M10 147.5H12M4.5 151.5H11.5M10 154.5H12M10 158.5H12M10 162.5H12M10 166.5H12M8 170.5H12M10 173.5H12M10 177.5H12M10 181.5H12M10 185.5H12M4.5 188.5H11.5M10 192.5H12M10 196.5H12M10 200.5H12M10 204.5H12M8 207.5H12M10 211.5H12M10 215.5H12M10 219.5H12M10 222.5H12M4.5 226.5H11.5M10 230.5H12M10 234.5H12M10 238.5H12M10 241.5H12M8 245.5H12M10 249.5H12M10 253.5H12M10 256.5H12M10 260.5H12M4.5 264.5H11.5M10 268.5H12M10 272.5H12M10 275.5H12M10 279.5H12M8 283.5H12M10 287.5H12M10 290.5H12M10 294.5H12M10 298.5H12M4.5 302.5H11.5M10 306.5H12M10 309.5H12M10 313.5H12M10 317.5H12M8 321.5H12M10 324.5H12M10 328.5H12M10 332.5H12" stroke="#555" stroke-width="1"/><text transform="translate(8,43.0) rotate(-90)" font-size="9" fill="#666" font-family="Liberation Sans">1</text><text transform="translate(8,6.0) rotate(-90)" font-size="9" fill="#666" font-family="Liberation Sans">2</text><text transform="translate(8,119.0) rotate(-90)" font-size="9" fill="#666" font-family="Liberation Sans">1</text><text transform="translate(8,157.0) rotate(-90)" font-size="9" fill="#666" font-family="Liberation Sans">2</text><text transform="translate(8,194.0) rotate(-90)" font-size="9" fill="#666" font-family="Liberation Sans">3</text><text transform="translate(8,232.0) rotate(-90)" font-size="9" fill="#666" font-family="Liberation Sans">4</text><text transform="translate(8,270.0) rotate(-90)" font-size="9" fill="#666" font-family="Liberation Sans">5</text><text transform="translate(8,308.0) rotate(-90)" font-size="9" fill="#666" font-family="Liberation Sans">6</text></svg>
<svg class="a" style="left:1644px;top:345px;" width="7" height="10" viewBox="0 0 7 10"><path d="M3.5 0V9M0.8 5.5L3.5 9L6.2 5.5" stroke="#555" stroke-width="1.5" fill="none"/><path d="M0.5 9.5H6.5" stroke="#555" stroke-width="1"/></svg>
<div class="a" style="left:2513.5px;top:214px;width:61.5px;height:15px;background:#f0f0f0;border:1px solid #fff;border-right:none;box-sizing:border-box;"></div>
<div class="a" style="left:2575px;top:214px;width:650px;height:15px;background:#fff;"></div>
<svg class="a" style="left:2513.5px;top:214px;" width="712" height="15" viewBox="0 0 712 15"><path d="M58.5 10V12M54.5 10V12M50.5 10V12M46.5 10V12M43.5 8V12M39.5 10V12M35.5 10V12M31.5 10V12M27.5 10V12M24.5 4V12M20.5 10V12M16.5 10V12M12.5 10V12M9.5 10V12M5.5 8V12M1.5 10V12M65.5 10V12M69.5 10V12M73.5 10V12M77.5 10V12M80.5 8V12M84.5 10V12M88.5 10V12M92.5 10V12M96.5 10V12M99.5 4V12M103.5 10V12M107.5 10V12M111.5 10V12M114.5 10V12M118.5 8V12M122.5 10V12M126.5 10V12M130.5 10V12M133.5 10V12M137.5 4V12M141.5 10V12M145.5 10V12M148.5 10V12M152.5 10V12M156.5 8V12M160.5 10V12M164.5 10V12M167.5 10V12M171.5 10V12M175.5 4V12M179.5 10V12M182.5 10V12M186.5 10V12M190.5 10V12M194.5 8V12M198.5 10V12M201.5 10V12M205.5 10V12M209.5 10V12M213.5 4V12M216.5 10V12M220.5 10V12M224.5 10V12M228.5 10V12M232.5 8V12M235.5 10V12M239.5 10V12M243.5 10V12M247.5 10V12M250.5 4V12M254.5 10V12M258.5 10V12M262.5 10V12M266.5 10V12M269.5 8V12M273.5 10V12M277.5 10V12M281.5 10V12M285.5 10V12M288.5 4V12M292.5 10V12M296.5 10V12M300.5 10V12M303.5 10V12M307.5 8V12M311.5 10V12M315.5 10V12M319.5 10V12M322.5 10V12M326.5 4V12M330.5 10V12M334.5 10V12M337.5 10V12M341.5 10V12M345.5 8V12M349.5 10V12M353.5 10V12M356.5 10V12M360.5 10V12M364.5 4V12M368.5 10V12M371.5 10V12M375.5 10V12M379.5 10V12M383.5 8V12M387.5 10V12M390.5 10V12M394.5 10V12M398.5 10V12M402.5 4V12M405.5 10V12M409.5 10V12M413.5 10V12M417.5 10V12M421.5 8V12M424.5 10V12M428.5 10V12M432.5 10V12M436.5 10V12M440.5 4V12M443.5 10V12M447.5 10V12M451.5 10V12M455.5 10V12M458.5 8V12M462.5 10V12M466.5 10V12M470.5 10V12M474.5 10V12M477.5 4V12M481.5 10V12M485.5 10V12M489.5 10V12M492.5 10V12M496.5 8V12M500.5 10V12M504.5 10V12M508.5 10V12M511.5 10V12M515.5 4V12M519.5 10V12M523.5 10V12M526.5 10V12M530.5 10V12M534.5 8V12M538.5 10V12M542.5 10V12M545.5 10V12M549.5 10V12M553.5 4V12M557.5 10V12M560.5 10V12M564.5 10V12M568.5 10V12M572.5 8V12M576.5 10V12M579.5 10V12M583.5 10V12M587.5 10V12M591.5 4V12M594.5 10V12M598.5 10V12M602.5 10V12M606.5 10V12M610.5 8V12M613.5 10V12M617.5 10V12M621.5 10V12M625.5 10V12M628.5 4V12M632.5 10V12M636.5 10V12M640.5 10V12M644.5 10V12M647.5 8V12M651.5 10V12M655.5 10V12M659.5 10V12M663.5 10V12M666.5 4V12M670.5 10V12M674.5 10V12M678.5 10V12M681.5 10V12M685.5 8V12M689.5 10V12M693.5 10V12M697.5 10V12M700.5 10V12M704.5 4V12M708.5 10V12" stroke="#555" stroke-width="1"/><text x="26.3" y="8" font-size="9" fill="#666" font-family="Liberation Sans">1</text><text x="101.3" y="8" font-size="9" fill="#666" font-family="Liberation Sans">1</text><text x="139.3" y="8" font-size="9" fill="#666" font-family="Liberation Sans">2</text><text x="177.3" y="8" font-size="9" fill="#666" font-family="Liberation Sans">3</text><text x="215.3" y="8" font-size="9" fill="#666" font-family="Liberation Sans">4</text><text x="252.3" y="8" font-size="9" fill="#666" font-family="Liberation Sans">5</text><text x="290.3" y="8" font-size="9" fill="#666" font-family="Liberation Sans">6</text><text x="328.3" y="8" font-size="9" fill="#666" font-family="Liberation Sans">7</text><text x="366.3" y="8" font-size="9" fill="#666" font-family="Liberation Sans">8</text><text x="404.3" y="8" font-size="9" fill="#666" font-family="Liberation Sans">9</text><text x="442.3" y="8" font-size="9" fill="#666" font-family="Liberation Sans">10</text><text x="479.3" y="8" font-size="9" fill="#666" font-family="Liberation Sans">11</text><text x="517.3" y="8" font-size="9" fill="#666" font-family="Liberation Sans">12</text><text x="555.3" y="8" font-size="9" fill="#666" font-family="Liberation Sans">13</text><text x="593.3" y="8" font-size="9" fill="#666" font-family="Liberation Sans">14</text><text x="630.3" y="8" font-size="9" fill="#666" font-family="Liberation Sans">15</text><text x="668.3" y="8" font-size="9" fill="#666" font-family="Liberation Sans">16</text><text x="706.3" y="8" font-size="9" fill="#666" font-family="Liberation Sans">17</text></svg>
<svg class="a" style="left:2575px;top:216px;" width="6" height="11" viewBox="0 0 6 11"><path d="M0 0L5.5 5.2H0ZM0 6.2H5.5L0 11Z" fill="#555"/></svg>
<svg class="a" style="left:2565px;top:229px;" width="11" height="6" viewBox="0 0 11 6"><path d="M0 3H8M5.5 0.8L8.2 3L5.5 5.2M9.5 0V6" stroke="#555" stroke-width="1.6" fill="none"/></svg>
<svg class="a" style="left:2622.5px;top:227px;" width="6" height="6" viewBox="0 0 6 6"><path d="M1 0V4.8H6" stroke="#555" stroke-width="1.8" fill="none"/></svg>
<svg class="a" style="left:2670.5px;top:227px;" width="6" height="6" viewBox="0 0 6 6"><path d="M1 0V4.8H6" stroke="#555" stroke-width="1.8" fill="none"/></svg>
<svg class="a" style="left:2718.5px;top:227px;" width="6" height="6" viewBox="0 0 6 6"><path d="M1 0V4.8H6" stroke="#555" stroke-width="1.8" fill="none"/></svg>
<svg class="a" style="left:2766.5px;top:227px;" width="6" height="6" viewBox="0 0 6 6"><path d="M1 0V4.8H6" stroke="#555" stroke-width="1.8" fill="none"/></svg>
<svg class="a" style="left:2814.5px;top:227px;" width="6" height="6" viewBox="0 0 6 6"><path d="M1 0V4.8H6" stroke="#555" stroke-width="1.8" fill="none"/></svg>
<svg class="a" style="left:2862.5px;top:227px;" width="6" height="6" viewBox="0 0 6 6"><path d="M1 0V4.8H6" stroke="#555" stroke-width="1.8" fill="none"/></svg>
<svg class="a" style="left:2910.5px;top:227px;" width="6" height="6" viewBox="0 0 6 6"><path d="M1 0V4.8H6" stroke="#555" stroke-width="1.8" fill="none"/></svg>
<svg class="a" style="left:2958.5px;top:227px;" width="6" height="6" viewBox="0 0 6 6"><path d="M1 0V4.8H6" stroke="#555" stroke-width="1.8" fill="none"/></svg>
<svg class="a" style="left:3006.5px;top:227px;" width="6" height="6" viewBox="0 0 6 6"><path d="M1 0V4.8H6" stroke="#555" stroke-width="1.8" fill="none"/></svg>
<svg class="a" style="left:3054.5px;top:227px;" width="6" height="6" viewBox="0 0 6 6"><path d="M1 0V4.8H6" stroke="#555" stroke-width="1.8" fill="none"/></svg>
<svg class="a" style="left:3102.5px;top:227px;" width="6" height="6" viewBox="0 0 6 6"><path d="M1 0V4.8H6" stroke="#555" stroke-width="1.8" fill="none"/></svg>
<svg class="a" style="left:3150.5px;top:227px;" width="6" height="6" viewBox="0 0 6 6"><path d="M1 0V4.8H6" stroke="#555" stroke-width="1.8" fill="none"/></svg>
<svg class="a" style="left:3198.5px;top:227px;" width="6" height="6" viewBox="0 0 6 6"><path d="M1 0V4.8H6" stroke="#555" stroke-width="1.8" fill="none"/></svg>
<div class="a" style="left:1654px;top:239px;width:1571px;height:366px;background:#fff;"></div>
<div class="a" style="left:1655px;top:240px;width:1570px;height:365px;background:#d9d9d9;border-left:1px solid #000;border-top:1px solid #000;box-sizing:border-box;"></div>
<div class="a" style="left:1731px;top:250px;width:1494px;height:355px;background:#5f5f5f;"></div>
<div class="a" style="left:1732px;top:251px;width:1493px;height:47px;background:#fff;"></div>
<svg class="a" style="left:1734px;top:254px;" width="12" height="16" viewBox="0 0 12 16"><defs><linearGradient id="cone" x1="0" y1="0" x2="1" y2="0"><stop offset="0" stop-color="#f39a3c"/><stop offset="0.5" stop-color="#fbc27a"/><stop offset="1" stop-color="#f3a04a"/></linearGradient></defs><path d="M6 0.5L11.5 14H0.5Z" fill="url(#cone)"/><path d="M6 0.5L8 5.5H4Z" fill="#333"/><ellipse cx="6" cy="13.5" rx="5.8" ry="2.3" fill="#e8000a"/></svg>
<div class="a" style="left:1755px;top:256px;width:1px;height:12px;background:#777;"></div>
<svg class="a" style="left:1767px;top:256px;" width="12" height="14" viewBox="0 0 12 14"><path d="M0.75 0.75H8L11.25 4V13.25H0.75Z" fill="#fff" stroke="#3e4248" stroke-width="1.3"/><path d="M8 0.75V4H11.25Z" fill="#3e4248"/><path d="M2.5 3.5H6M2.5 6.5H9.5M2.5 8.5H9.5M2.5 10.5H9.5" stroke="#5a8ad6" stroke-width="0.9"/></svg>
<svg class="a" style="left:1788px;top:257px;" width="14" height="12" viewBox="0 0 14 12"><path d="M0 0H5L6 1.5H14V12H0Z" fill="#f6bd5f"/><path d="M0 2.5H14V3.5H0Z" fill="#fff"/><path d="M0 6.5H8L9.5 4.5H14" stroke="#555a60" stroke-width="0.9" fill="none"/></svg>
<svg class="a" style="left:1810px;top:256px;" width="14" height="14" viewBox="0 0 14 14"><path d="M0 0H14V14H2L0 12Z" fill="#3c4046"/><rect x="2" y="2" width="10" height="4.5" fill="#fff"/><rect x="3" y="9" width="8" height="5" fill="#e2e8f2"/><rect x="4" y="10" width="1.5" height="3" fill="#3c4046"/></svg>
<svg class="a" style="left:1833px;top:259px;" width="12" height="8" viewBox="0 0 12 8"><path d="M0 3L4 0V2C8 2 11 4 12 8C10 5.5 7 4.5 4 4.5V6.5Z" fill="#7f97c0"/></svg>
<svg class="a" style="left:1855px;top:259px;" width="12" height="8" viewBox="0 0 12 8"><path d="M12 3L8 0V2C4 2 1 4 0 8C2 5.5 5 4.5 8 4.5V6.5Z" fill="#7f97c0"/></svg>
<svg class="a" style="left:1876px;top:261px;" width="7" height="6" viewBox="0 0 7 6"><rect x="0" y="0" width="7" height="1.2" fill="#111"/><path d="M0 2.5H7L3.5 6Z" fill="#111"/></svg>
<div class="a" style="left:1891px;top:256px;width:1px;height:12px;background:#777;"></div>
<div class="t" style="left:1899.30px;top:255.74px;font-size:12px;color:#111;font-family:'Liberation Sans', sans-serif;transform:scaleX(0.9528);transform-origin:0 0;">ArCADia-TEXT - ArCADiaTEXT0.rtf</div>
<div class="a" style="left:1732px;top:274px;width:56px;height:23px;background:#1a78c8;"></div>
<div class="a" style="left:1732px;top:297px;width:1493px;height:1px;background:#dadbdc;"></div>
<div class="a" style="left:1850px;top:274px;width:62px;height:24px;background:#f3f4f6;border:1px solid #dadbdc;border-bottom:none;box-sizing:border-box;"></div>
<div class="t" style="left:1747.00px;top:280.55px;font-size:10px;color:#fff;font-family:'Liberation Sans', sans-serif;font-weight:bold;transform:scaleX(0.9367);transform-origin:0 0;">FILE</div>
<div class="t" style="left:1802.60px;top:280.05px;font-size:11px;color:#333;font-family:'Liberation Sans', sans-serif;transform:scaleX(0.9758);transform-origin:0 0;">HOME</div>
<div class="t" style="left:1864.30px;top:280.05px;font-size:11px;color:#333;font-family:'Liberation Sans', sans-serif;transform:scaleX(0.8620);transform-origin:0 0;">INSERT</div>
<div class="t" style="left:1929.60px;top:280.05px;font-size:11px;color:#333;font-family:'Liberation Sans', sans-serif;transform:scaleX(0.8677);transform-origin:0 0;">PAGE LAYOUT</div>
<div class="t" style="left:2026.00px;top:280.05px;font-size:11px;color:#333;font-family:'Liberation Sans', sans-serif;transform:scaleX(0.9244);transform-origin:0 0;">VIEW</div>
<div class="a" style="left:1732px;top:298px;width:1493px;height:91px;background:#f3f4f6;"></div>
<div class="a" style="left:1732px;top:389px;width:1493px;height:1px;background:#dadbdc;"></div>
<div class="a" style="left:1732px;top:390px;width:1493px;height:215px;background:#f0f0f0;"></div>
<div class="a" style="left:1732px;top:390px;width:1493px;height:1px;background:#fff;"></div>
<div class="a" style="left:1732px;top:393px;width:16px;height:16px;background:#fff;"></div>
<div class="a" style="left:1733px;top:394px;width:14px;height:14px;background:#f8f8f8;border:1px solid #a6a6a6;box-sizing:border-box;"></div>
<svg class="a" style="left:1739px;top:398px;" width="6" height="7" viewBox="0 0 6 7"><path d="M1 0V5.8H6" stroke="#000" stroke-width="2" fill="none"/></svg>
<div class="a" style="left:1736px;top:458px;width:15px;height:76px;background:#f0f0f0;border:1px solid #fff;border-bottom:none;box-sizing:border-box;"></div>
<div class="a" style="left:1736px;top:534px;width:15px;height:71px;background:#fff;"></div>
<svg class="a" style="left:1736px;top:458px;" width="16" height="148" viewBox="0 0 16 148"><path d="M10 72.5H12M10 68.5H12M10 65.5H12M10 61.5H12M8 57.5H12M10 53.5H12M10 50.5H12M10 46.5H12M10 42.5H12M4.5 38.5H11.5M10 34.5H12M10 31.5H12M10 27.5H12M10 23.5H12M8 19.5H12M10 16.5H12M10 12.5H12M10 8.5H12M10 4.5H12M4.5 0.5H11.5M3 76.5H12M10 80.5H12M10 84.5H12M10 87.5H12M10 91.5H12M8 95.5H12M10 99.5H12M10 102.5H12M10 106.5H12M10 110.5H12M4.5 114.5H11.5M10 118.5H12M10 121.5H12M10 125.5H12M10 129.5H12M8 133.5H12M10 136.5H12M10 140.5H12M10 144.5H12M10 148.5H12M4.5 152.5H11.5" stroke="#555" stroke-width="1"/><text transform="translate(8,44.0) rotate(-90)" font-size="9" fill="#666" font-family="Liberation Sans">1</text><text transform="translate(8,6.0) rotate(-90)" font-size="9" fill="#666" font-family="Liberation Sans">2</text><text transform="translate(8,120.0) rotate(-90)" font-size="9" fill="#666" font-family="Liberation Sans">1</text><text transform="translate(8,158.0) rotate(-90)" font-size="9" fill="#666" font-family="Liberation Sans">2</text></svg>
<svg class="a" style="left:1751px;top:525px;" width="7" height="10" viewBox="0 0 7 10"><path d="M3.5 0V9M0.8 5.5L3.5 9L6.2 5.5" stroke="#555" stroke-width="1.5" fill="none"/><path d="M0.5 9.5H6.5" stroke="#555" stroke-width="1"/></svg>
<div class="a" style="left:2620.5px;top:394px;width:60.5px;height:15px;background:#f0f0f0;border:1px solid #fff;border-right:none;box-sizing:border-box;"></div>
<div class="a" style="left:2681px;top:394px;width:544px;height:15px;background:#fff;"></div>
<svg class="a" style="left:2620.5px;top:394px;" width="605" height="15" viewBox="0 0 605 15"><path d="M57.5 10V12M53.5 10V12M49.5 10V12M45.5 10V12M42.5 8V12M38.5 10V12M34.5 10V12M30.5 10V12M26.5 10V12M23.5 4V12M19.5 10V12M15.5 10V12M11.5 10V12M8.5 10V12M4.5 8V12M0.5 10V12M64.5 10V12M68.5 10V12M72.5 10V12M76.5 10V12M79.5 8V12M83.5 10V12M87.5 10V12M91.5 10V12M95.5 10V12M98.5 4V12M102.5 10V12M106.5 10V12M110.5 10V12M113.5 10V12M117.5 8V12M121.5 10V12M125.5 10V12M129.5 10V12M132.5 10V12M136.5 4V12M140.5 10V12M144.5 10V12M147.5 10V12M151.5 10V12M155.5 8V12M159.5 10V12M163.5 10V12M166.5 10V12M170.5 10V12M174.5 4V12M178.5 10V12M181.5 10V12M185.5 10V12M189.5 10V12M193.5 8V12M197.5 10V12M200.5 10V12M204.5 10V12M208.5 10V12M212.5 4V12M215.5 10V12M219.5 10V12M223.5 10V12M227.5 10V12M231.5 8V12M234.5 10V12M238.5 10V12M242.5 10V12M246.5 10V12M250.5 4V12M253.5 10V12M257.5 10V12M261.5 10V12M265.5 10V12M268.5 8V12M272.5 10V12M276.5 10V12M280.5 10V12M284.5 10V12M287.5 4V12M291.5 10V12M295.5 10V12M299.5 10V12M302.5 10V12M306.5 8V12M310.5 10V12M314.5 10V12M318.5 10V12M321.5 10V12M325.5 4V12M329.5 10V12M333.5 10V12M336.5 10V12M340.5 10V12M344.5 8V12M348.5 10V12M352.5 10V12M355.5 10V12M359.5 10V12M363.5 4V12M367.5 10V12M370.5 10V12M374.5 10V12M378.5 10V12M382.5 8V12M386.5 10V12M389.5 10V12M393.5 10V12M397.5 10V12M401.5 4V12M404.5 10V12M408.5 10V12M412.5 10V12M416.5 10V12M420.5 8V12M423.5 10V12M427.5 10V12M431.5 10V12M435.5 10V12M438.5 4V12M442.5 10V12M446.5 10V12M450.5 10V12M454.5 10V12M457.5 8V12M461.5 10V12M465.5 10V12M469.5 10V12M473.5 10V12M476.5 4V12M480.5 10V12M484.5 10V12M488.5 10V12M491.5 10V12M495.5 8V12M499.5 10V12M503.5 10V12M507.5 10V12M510.5 10V12M514.5 4V12M518.5 10V12M522.5 10V12M525.5 10V12M529.5 10V12M533.5 8V12M537.5 10V12M541.5 10V12M544.5 10V12M548.5 10V12M552.5 4V12M556.5 10V12M559.5 10V12M563.5 10V12M567.5 10V12M571.5 8V12M575.5 10V12M578.5 10V12M582.5 10V12M586.5 10V12M590.5 4V12M593.5 10V12M597.5 10V12M601.5 10V12" stroke="#555" stroke-width="1"/><text x="25.3" y="8" font-size="9" fill="#666" font-family="Liberation Sans">1</text><text x="100.3" y="8" font-size="9" fill="#666" font-family="Liberation Sans">1</text><text x="138.3" y="8" font-size="9" fill="#666" font-family="Liberation Sans">2</text><text x="176.3" y="8" font-size="9" fill="#666" font-family="Liberation Sans">3</text><text x="214.3" y="8" font-size="9" fill="#666" font-family="Liberation Sans">4</text><text x="252.3" y="8" font-size="9" fill="#666" font-family="Liberation Sans">5</text><text x="289.3" y="8" font-size="9" fill="#666" font-family="Liberation Sans">6</text><text x="327.3" y="8" font-size="9" fill="#666" font-family="Liberation Sans">7</text><text x="365.3" y="8" font-size="9" fill="#666" font-family="Liberation Sans">8</text><text x="403.3" y="8" font-size="9" fill="#666" font-family="Liberation Sans">9</text><text x="440.3" y="8" font-size="9" fill="#666" font-family="Liberation Sans">10</text><text x="478.3" y="8" font-size="9" fill="#666" font-family="Liberation Sans">11</text><text x="516.3" y="8" font-size="9" fill="#666" font-family="Liberation Sans">12</text><text x="554.3" y="8" font-size="9" fill="#666" font-family="Liberation Sans">13</text><text x="592.3" y="8" font-size="9" fill="#666" font-family="Liberation Sans">14</text></svg>
<svg class="a" style="left:2681px;top:396px;" width="6" height="11" viewBox="0 0 6 11"><path d="M0 0L5.5 5.2H0ZM0 6.2H5.5L0 11Z" fill="#555"/></svg>
<svg class="a" style="left:2671px;top:409px;" width="11" height="6" viewBox="0 0 11 6"><path d="M0 3H8M5.5 0.8L8.2 3L5.5 5.2M9.5 0V6" stroke="#555" stroke-width="1.6" fill="none"/></svg>
<svg class="a" style="left:2728.5px;top:407px;" width="6" height="6" viewBox="0 0 6 6"><path d="M1 0V4.8H6" stroke="#555" stroke-width="1.8" fill="none"/></svg>
<svg class="a" style="left:2776.5px;top:407px;" width="6" height="6" viewBox="0 0 6 6"><path d="M1 0V4.8H6" stroke="#555" stroke-width="1.8" fill="none"/></svg>
<svg class="a" style="left:2824.5px;top:407px;" width="6" height="6" viewBox="0 0 6 6"><path d="M1 0V4.8H6" stroke="#555" stroke-width="1.8" fill="none"/></svg>
<svg class="a" style="left:2872.5px;top:407px;" width="6" height="6" viewBox="0 0 6 6"><path d="M1 0V4.8H6" stroke="#555" stroke-width="1.8" fill="none"/></svg>
<svg class="a" style="left:2920.5px;top:407px;" width="6" height="6" viewBox="0 0 6 6"><path d="M1 0V4.8H6" stroke="#555" stroke-width="1.8" fill="none"/></svg>
<svg class="a" style="left:2968.5px;top:407px;" width="6" height="6" viewBox="0 0 6 6"><path d="M1 0V4.8H6" stroke="#555" stroke-width="1.8" fill="none"/></svg>
<svg class="a" style="left:3016.5px;top:407px;" width="6" height="6" viewBox="0 0 6 6"><path d="M1 0V4.8H6" stroke="#555" stroke-width="1.8" fill="none"/></svg>
<svg class="a" style="left:3064.5px;top:407px;" width="6" height="6" viewBox="0 0 6 6"><path d="M1 0V4.8H6" stroke="#555" stroke-width="1.8" fill="none"/></svg>
<svg class="a" style="left:3112.5px;top:407px;" width="6" height="6" viewBox="0 0 6 6"><path d="M1 0V4.8H6" stroke="#555" stroke-width="1.8" fill="none"/></svg>
<svg class="a" style="left:3160.5px;top:407px;" width="6" height="6" viewBox="0 0 6 6"><path d="M1 0V4.8H6" stroke="#555" stroke-width="1.8" fill="none"/></svg>
<svg class="a" style="left:3208.5px;top:407px;" width="6" height="6" viewBox="0 0 6 6"><path d="M1 0V4.8H6" stroke="#555" stroke-width="1.8" fill="none"/></svg>
<div class="a" style="left:1761px;top:419px;width:1464px;height:186px;background:#fff;"></div>
<div class="a" style="left:1762px;top:420px;width:1463px;height:185px;background:#d9d9d9;border-left:1px solid #000;border-top:1px solid #000;box-sizing:border-box;"></div>
<svg class="a" style="left:1749px;top:308px;" width="20" height="26" viewBox="0 0 20 26"><defs><linearGradient id="pg" x1="0" y1="0" x2="1" y2="1"><stop offset="0" stop-color="#fff"/><stop offset="1" stop-color="#e6e6e6"/></linearGradient></defs><path d="M0.75 0.75H12L19.25 8V25.25H0.75Z" fill="url(#pg)" stroke="#474b50" stroke-width="1.5"/><path d="M12 0.75V8H19.25Z" fill="#474b50"/></svg>
<div class="t" style="left:1744.45px;top:340.94px;font-size:11px;color:#333;font-family:'Liberation Sans', sans-serif;transform:scaleX(1.0279);transform-origin:0 0;">Blank</div>
<div class="t" style="left:1746.50px;top:353.85px;font-size:11px;color:#333;font-family:'Liberation Sans', sans-serif;transform:scaleX(0.9409);transform-origin:0 0;">Page</div>
<svg class="a" style="left:1788px;top:306px;" width="24" height="30" viewBox="0 0 24 30"><path d="M4.75 0V7.75H23.25V0" fill="#fff" stroke="#474b50" stroke-width="1.5"/><path d="M7 1.5H21M7 3.5H21M7 5.5H21" stroke="#888" stroke-width="0.8"/><path d="M4.75 30V14.75H23.25V30" fill="#fff" stroke="#474b50" stroke-width="1.5"/><path d="M7 17.5H21M7 19.5H21M7 21.5H21M7 23.5H21M7 25.5H21M7 27.5H21" stroke="#888" stroke-width="0.8"/><path d="M0.5 7L6 11L0.5 15Z" fill="#1e5ec4"/></svg>
<div class="t" style="left:1788.35px;top:340.94px;font-size:11px;color:#333;font-family:'Liberation Sans', sans-serif;transform:scaleX(0.9448);transform-origin:0 0;">Page</div>
<div class="t" style="left:1786.45px;top:353.85px;font-size:11px;color:#333;font-family:'Liberation Sans', sans-serif;transform:scaleX(0.9843);transform-origin:0 0;">Break</div>
<div class="a" style="left:1828px;top:301px;width:1px;height:84px;background:#e1e2e4;"></div>
<svg class="a" style="left:1842px;top:310px;" width="24" height="22" viewBox="0 0 24 22"><rect x="0.75" y="0.75" width="22.5" height="20.5" fill="#fff" stroke="#474b50" stroke-width="1.5"/><rect x="1.5" y="1.5" width="21" height="2.2" fill="#1e5ec4"/><path d="M1 4.5H23M1 7.5H23M1 10.5H23M1 13.5H23M1 16.5H23M3.5 4V21M8.5 4V21M13.5 4V21M18.5 4V21" stroke="#474b50" stroke-width="1"/></svg>
<div class="t" style="left:1840.00px;top:340.94px;font-size:11px;color:#333;font-family:'Liberation Sans', sans-serif;transform:scaleX(0.9653);transform-origin:0 0;">Table</div>
<div class="a" style="left:1881px;top:301px;width:1px;height:84px;background:#e1e2e4;"></div>
<svg class="a" style="left:1902px;top:309px;" width="28" height="24" viewBox="0 0 28 24"><defs><radialGradient id="ph" cx="0.55" cy="0.45" r="0.6"><stop offset="0" stop-color="#e8ebf0"/><stop offset="0.6" stop-color="#8a909c"/><stop offset="1" stop-color="#3e4452"/></radialGradient></defs><rect x="0.75" y="4.75" width="26.5" height="18.5" fill="#fff" stroke="#474b50" stroke-width="1.5"/><rect x="2" y="6" width="24" height="16" fill="url(#ph)"/><path d="M2 17L8 13L12 15L17 10L22 14L26 12V22H2Z" fill="#5a606c" opacity="0.8"/><path d="M2 19H26" stroke="#d0d4da" stroke-width="0.8" opacity="0.7"/><path d="M3.5 13V3C3.5 0.8 7.5 0.8 7.5 3V12C7.5 14 4.8 14 4.8 12V5" stroke="#50555c" stroke-width="1" fill="none"/></svg>
<div class="t" style="left:1900.00px;top:340.94px;font-size:11px;color:#333;font-family:'Liberation Sans', sans-serif;transform:scaleX(0.9937);transform-origin:0 0;">Image</div>
<div class="a" style="left:1953px;top:301px;width:1px;height:84px;background:#e1e2e4;"></div>
<div class="a" style="left:1958px;top:302px;width:42px;height:66px;background:#cce4f7;border:1px solid #6aaae8;box-sizing:border-box;"></div>
<svg class="a" style="left:1969px;top:308px;" width="20" height="26" viewBox="0 0 20 26"><defs><linearGradient id="pg" x1="0" y1="0" x2="1" y2="1"><stop offset="0" stop-color="#fff"/><stop offset="1" stop-color="#e6e6e6"/></linearGradient></defs><path d="M0.75 0.75H12L19.25 8V25.25H0.75Z" fill="url(#pg)" stroke="#474b50" stroke-width="1.5"/><path d="M12 0.75V8H19.25Z" fill="#474b50"/><rect x="2.5" y="4" width="8.5" height="4.5" fill="#a8a8a8"/><path d="M4 6.2H9" stroke="#1e5ec4" stroke-width="0.9"/><path d="M2.5 10.8H17.5M2.5 13.8H17.5M2.5 16.8H17.5M2.5 19.8H17.5M2.5 22.8H17.5" stroke="#1e5ec4" stroke-width="1"/></svg>
<div class="t" style="left:1960.35px;top:340.94px;font-size:11px;color:#333;font-family:'Liberation Sans', sans-serif;transform:scaleX(1.0057);transform-origin:0 0;">Header</div>
<svg class="a" style="left:1976px;top:358px;" width="5" height="3" viewBox="0 0 5 3"><path d="M0 0H5L2.5 3Z" fill="#333"/></svg>
<svg class="a" style="left:2011px;top:308px;" width="20" height="26" viewBox="0 0 20 26"><defs><linearGradient id="pg" x1="0" y1="0" x2="1" y2="1"><stop offset="0" stop-color="#fff"/><stop offset="1" stop-color="#e6e6e6"/></linearGradient></defs><path d="M0.75 0.75H12L19.25 8V25.25H0.75Z" fill="url(#pg)" stroke="#474b50" stroke-width="1.5"/><path d="M12 0.75V8H19.25Z" fill="#474b50"/><path d="M2.5 4.5H11M2.5 7.5H11M2.5 10.5H17.5M2.5 13.5H17.5M2.5 16.5H17.5" stroke="#1e5ec4" stroke-width="1"/><rect x="2" y="19.5" width="16" height="5" fill="#a8a8a8"/><path d="M4 22H16" stroke="#1e5ec4" stroke-width="1"/></svg>
<div class="t" style="left:2003.30px;top:340.94px;font-size:11px;color:#333;font-family:'Liberation Sans', sans-serif;transform:scaleX(1.0499);transform-origin:0 0;">Footer</div>
<svg class="a" style="left:2018px;top:358px;" width="5" height="3" viewBox="0 0 5 3"><path d="M0 0H5L2.5 3Z" fill="#333"/></svg>
<svg class="a" style="left:2059px;top:308px;" width="20" height="26" viewBox="0 0 20 26"><defs><linearGradient id="pg" x1="0" y1="0" x2="1" y2="1"><stop offset="0" stop-color="#fff"/><stop offset="1" stop-color="#e6e6e6"/></linearGradient></defs><path d="M0.75 0.75H12L19.25 8V25.25H0.75Z" fill="url(#pg)" stroke="#474b50" stroke-width="1.5"/><path d="M12 0.75V8H19.25Z" fill="#474b50"/><path d="M2.5 6.5H8M2.5 10.5H17.5M2.5 13.5H17.5M2.5 16.5H10M2.5 19.5H10M2.5 22.5H10" stroke="#6e9ad8" stroke-width="0.9"/><text x="11" y="24" font-size="10" font-weight="bold" fill="#1e5ec4" font-family="Liberation Sans">#</text></svg>
<div class="t" style="left:2056.85px;top:340.94px;font-size:11px;color:#333;font-family:'Liberation Sans', sans-serif;transform:scaleX(0.9448);transform-origin:0 0;">Page</div>
<div class="t" style="left:2044.45px;top:353.85px;font-size:11px;color:#333;font-family:'Liberation Sans', sans-serif;transform:scaleX(1.0351);transform-origin:0 0;">Number</div>
<svg class="a" style="left:2088px;top:358px;" width="5" height="3" viewBox="0 0 5 3"><path d="M0 0H5L2.5 3Z" fill="#333"/></svg>
<div class="a" style="left:2102px;top:301px;width:1px;height:84px;background:#e1e2e4;"></div>
<div class="t" style="left:1765.60px;top:373.75px;font-size:11px;color:#4a4a4a;font-family:'Liberation Sans', sans-serif;transform:scaleX(0.9225);transform-origin:0 0;">Pages</div>
<div class="t" style="left:1838.15px;top:373.75px;font-size:11px;color:#4a4a4a;font-family:'Liberation Sans', sans-serif;transform:scaleX(0.9399);transform-origin:0 0;">Tables</div>
<div class="t" style="left:1886.05px;top:373.75px;font-size:11px;color:#4a4a4a;font-family:'Liberation Sans', sans-serif;transform:scaleX(1.0906);transform-origin:0 0;">Illustrations</div>
<div class="t" style="left:1974.58px;top:373.75px;font-size:11px;color:#4a4a4a;font-family:'Liberation Sans', sans-serif;">Header &amp; Footer</div>
<div class="a" style="left:1962px;top:372px;width:157px;height:108px;background:rgba(0,0,0,0.35);filter:blur(1.5px);"></div>
<div class="a" style="left:1959px;top:369px;width:157px;height:108px;background:#f9fafc;border:1px solid #d9dadc;border-radius:2px;box-sizing:border-box;"></div>
<svg class="a" style="left:1972px;top:379px;" width="20" height="26" viewBox="0 0 20 26"><defs><linearGradient id="pg" x1="0" y1="0" x2="1" y2="1"><stop offset="0" stop-color="#fff"/><stop offset="1" stop-color="#e6e6e6"/></linearGradient></defs><path d="M0.75 0.75H12L19.25 8V25.25H0.75Z" fill="url(#pg)" stroke="#474b50" stroke-width="1.5"/><path d="M12 0.75V8H19.25Z" fill="#474b50"/><rect x="2.5" y="4" width="8.5" height="4.5" fill="#a8a8a8"/><path d="M4 6.2H9" stroke="#1e5ec4" stroke-width="0.9"/><path d="M2.5 10.8H17.5M2.5 13.8H17.5M2.5 16.8H17.5M2.5 19.8H17.5M2.5 22.8H17.5" stroke="#5a8ad6" stroke-width="1"/></svg>
<div class="t" style="left:2005.70px;top:375.75px;font-size:11px;color:#333;font-family:'Liberation Sans', sans-serif;font-weight:bold;transform:scaleX(0.9557);transform-origin:0 0;">Edit Headers</div>
<div class="t" style="left:2005.70px;top:392.55px;font-size:11px;color:#444;font-family:'Liberation Sans', sans-serif;">Edit Headers</div>
<svg class="a" style="left:1972px;top:432px;" width="20" height="26" viewBox="0 0 20 26"><defs><linearGradient id="pg" x1="0" y1="0" x2="1" y2="1"><stop offset="0" stop-color="#fff"/><stop offset="1" stop-color="#e6e6e6"/></linearGradient></defs><path d="M0.75 0.75H12L19.25 8V25.25H0.75Z" fill="url(#pg)" stroke="#474b50" stroke-width="1.5"/><path d="M12 0.75V8H19.25Z" fill="#474b50"/><rect x="2.5" y="4" width="8.5" height="4.5" fill="#a8a8a8"/><path d="M4 6.2H9" stroke="#1e5ec4" stroke-width="0.9"/><path d="M8 3L12 7.5M12 3L8 7.5" stroke="#d0121b" stroke-width="1.6"/><path d="M2.5 10.8H17.5M2.5 13.8H17.5M2.5 16.8H17.5M2.5 19.8H17.5M2.5 22.8H17.5" stroke="#1e5ec4" stroke-width="1"/></svg>
<div class="t" style="left:2005.50px;top:429.05px;font-size:11px;color:#333;font-family:'Liberation Sans', sans-serif;font-weight:bold;transform:scaleX(0.9762);transform-origin:0 0;">Remove headers</div>
<div class="t" style="left:2005.50px;top:445.75px;font-size:11px;color:#444;font-family:'Liberation Sans', sans-serif;transform:scaleX(0.9903);transform-origin:0 0;">Remove headers</div>
<div class="a" style="left:2125px;top:308px;width:1100px;height:297px;background:#5f5f5f;"></div>
<div class="a" style="left:2126px;top:309px;width:1099px;height:47px;background:#fff;"></div>
<svg class="a" style="left:2128px;top:312px;" width="12" height="16" viewBox="0 0 12 16"><defs><linearGradient id="cone" x1="0" y1="0" x2="1" y2="0"><stop offset="0" stop-color="#f39a3c"/><stop offset="0.5" stop-color="#fbc27a"/><stop offset="1" stop-color="#f3a04a"/></linearGradient></defs><path d="M6 0.5L11.5 14H0.5Z" fill="url(#cone)"/><path d="M6 0.5L8 5.5H4Z" fill="#333"/><ellipse cx="6" cy="13.5" rx="5.8" ry="2.3" fill="#e8000a"/></svg>
<div class="a" style="left:2149px;top:314px;width:1px;height:12px;background:#777;"></div>
<svg class="a" style="left:2161px;top:314px;" width="12" height="14" viewBox="0 0 12 14"><path d="M0.75 0.75H8L11.25 4V13.25H0.75Z" fill="#fff" stroke="#3e4248" stroke-width="1.3"/><path d="M8 0.75V4H11.25Z" fill="#3e4248"/><path d="M2.5 3.5H6M2.5 6.5H9.5M2.5 8.5H9.5M2.5 10.5H9.5" stroke="#5a8ad6" stroke-width="0.9"/></svg>
<svg class="a" style="left:2182px;top:315px;" width="14" height="12" viewBox="0 0 14 12"><path d="M0 0H5L6 1.5H14V12H0Z" fill="#f6bd5f"/><path d="M0 2.5H14V3.5H0Z" fill="#fff"/><path d="M0 6.5H8L9.5 4.5H14" stroke="#555a60" stroke-width="0.9" fill="none"/></svg>
<svg class="a" style="left:2204px;top:314px;" width="14" height="14" viewBox="0 0 14 14"><path d="M0 0H14V14H2L0 12Z" fill="#3c4046"/><rect x="2" y="2" width="10" height="4.5" fill="#fff"/><rect x="3" y="9" width="8" height="5" fill="#e2e8f2"/><rect x="4" y="10" width="1.5" height="3" fill="#3c4046"/></svg>
<svg class="a" style="left:2227px;top:317px;" width="12" height="8" viewBox="0 0 12 8"><path d="M0 3L4 0V2C8 2 11 4 12 8C10 5.5 7 4.5 4 4.5V6.5Z" fill="#7f97c0"/></svg>
<svg class="a" style="left:2249px;top:317px;" width="12" height="8" viewBox="0 0 12 8"><path d="M12 3L8 0V2C4 2 1 4 0 8C2 5.5 5 4.5 8 4.5V6.5Z" fill="#7f97c0"/></svg>
<svg class="a" style="left:2270px;top:319px;" width="7" height="6" viewBox="0 0 7 6"><rect x="0" y="0" width="7" height="1.2" fill="#111"/><path d="M0 2.5H7L3.5 6Z" fill="#111"/></svg>
<div class="a" style="left:2285px;top:314px;width:1px;height:12px;background:#777;"></div>
<div class="t" style="left:2293.30px;top:313.74px;font-size:12px;color:#111;font-family:'Liberation Sans', sans-serif;transform:scaleX(0.9528);transform-origin:0 0;">ArCADia-TEXT - ArCADiaTEXT0.rtf</div>
<div class="a" style="left:2126px;top:332px;width:56px;height:23px;background:#1a78c8;"></div>
<div class="a" style="left:2126px;top:355px;width:1099px;height:1px;background:#dadbdc;"></div>
<div class="a" style="left:2308.4px;top:332px;width:96.3px;height:24px;background:#f3f4f6;border:1px solid #dadbdc;border-bottom:none;box-sizing:border-box;"></div>
<div class="t" style="left:2141.00px;top:338.55px;font-size:10px;color:#fff;font-family:'Liberation Sans', sans-serif;font-weight:bold;transform:scaleX(0.9367);transform-origin:0 0;">FILE</div>
<div class="t" style="left:2196.60px;top:338.05px;font-size:11px;color:#333;font-family:'Liberation Sans', sans-serif;transform:scaleX(0.9758);transform-origin:0 0;">HOME</div>
<div class="t" style="left:2258.30px;top:338.05px;font-size:11px;color:#333;font-family:'Liberation Sans', sans-serif;transform:scaleX(0.8620);transform-origin:0 0;">INSERT</div>
<div class="t" style="left:2323.60px;top:338.05px;font-size:11px;color:#333;font-family:'Liberation Sans', sans-serif;transform:scaleX(0.8677);transform-origin:0 0;">PAGE LAYOUT</div>
<div class="t" style="left:2420.00px;top:338.05px;font-size:11px;color:#333;font-family:'Liberation Sans', sans-serif;transform:scaleX(0.9244);transform-origin:0 0;">VIEW</div>
<div class="a" style="left:2126px;top:356px;width:1099px;height:91px;background:#f3f4f6;"></div>
<div class="a" style="left:2126px;top:447px;width:1099px;height:1px;background:#dadbdc;"></div>
<div class="a" style="left:2126px;top:448px;width:1099px;height:157px;background:#f0f0f0;"></div>
<div class="a" style="left:2126px;top:448px;width:1099px;height:1px;background:#fff;"></div>
<div class="a" style="left:2126px;top:451px;width:16px;height:16px;background:#fff;"></div>
<div class="a" style="left:2127px;top:452px;width:14px;height:14px;background:#f8f8f8;border:1px solid #a6a6a6;box-sizing:border-box;"></div>
<svg class="a" style="left:2133px;top:456px;" width="6" height="7" viewBox="0 0 6 7"><path d="M1 0V5.8H6" stroke="#000" stroke-width="2" fill="none"/></svg>
<div class="a" style="left:2130px;top:516px;width:15px;height:76px;background:#f0f0f0;border:1px solid #fff;border-bottom:none;box-sizing:border-box;"></div>
<div class="a" style="left:2130px;top:592px;width:15px;height:13px;background:#fff;"></div>
<svg class="a" style="left:2130px;top:516px;" width="16" height="90" viewBox="0 0 16 90"><path d="M10 72.5H12M10 68.5H12M10 65.5H12M10 61.5H12M8 57.5H12M10 53.5H12M10 50.5H12M10 46.5H12M10 42.5H12M4.5 38.5H11.5M10 34.5H12M10 31.5H12M10 27.5H12M10 23.5H12M8 19.5H12M10 16.5H12M10 12.5H12M10 8.5H12M10 4.5H12M4.5 0.5H11.5M3 76.5H12M10 80.5H12M10 84.5H12M10 87.5H12M10 91.5H12M8 95.5H12" stroke="#555" stroke-width="1"/><text transform="translate(8,44.0) rotate(-90)" font-size="9" fill="#666" font-family="Liberation Sans">1</text><text transform="translate(8,6.0) rotate(-90)" font-size="9" fill="#666" font-family="Liberation Sans">2</text></svg>
<svg class="a" style="left:2145px;top:583px;" width="7" height="10" viewBox="0 0 7 10"><path d="M3.5 0V9M0.8 5.5L3.5 9L6.2 5.5" stroke="#555" stroke-width="1.5" fill="none"/><path d="M0.5 9.5H6.5" stroke="#555" stroke-width="1"/></svg>
<div class="a" style="left:3014.5px;top:452px;width:60.5px;height:15px;background:#f0f0f0;border:1px solid #fff;border-right:none;box-sizing:border-box;"></div>
<div class="a" style="left:3075px;top:452px;width:150px;height:15px;background:#fff;"></div>
<svg class="a" style="left:3014.5px;top:452px;" width="211" height="15" viewBox="0 0 211 15"><path d="M57.5 10V12M53.5 10V12M49.5 10V12M45.5 10V12M42.5 8V12M38.5 10V12M34.5 10V12M30.5 10V12M26.5 10V12M23.5 4V12M19.5 10V12M15.5 10V12M11.5 10V12M8.5 10V12M4.5 8V12M0.5 10V12M64.5 10V12M68.5 10V12M72.5 10V12M76.5 10V12M79.5 8V12M83.5 10V12M87.5 10V12M91.5 10V12M95.5 10V12M98.5 4V12M102.5 10V12M106.5 10V12M110.5 10V12M113.5 10V12M117.5 8V12M121.5 10V12M125.5 10V12M129.5 10V12M132.5 10V12M136.5 4V12M140.5 10V12M144.5 10V12M147.5 10V12M151.5 10V12M155.5 8V12M159.5 10V12M163.5 10V12M166.5 10V12M170.5 10V12M174.5 4V12M178.5 10V12M181.5 10V12M185.5 10V12M189.5 10V12M193.5 8V12M197.5 10V12M200.5 10V12M204.5 10V12M208.5 10V12" stroke="#555" stroke-width="1"/><text x="25.3" y="8" font-size="9" fill="#666" font-family="Liberation Sans">1</text><text x="100.3" y="8" font-size="9" fill="#666" font-family="Liberation Sans">1</text><text x="138.3" y="8" font-size="9" fill="#666" font-family="Liberation Sans">2</text><text x="176.3" y="8" font-size="9" fill="#666" font-family="Liberation Sans">3</text></svg>
<svg class="a" style="left:3075px;top:454px;" width="6" height="11" viewBox="0 0 6 11"><path d="M0 0L5.5 5.2H0ZM0 6.2H5.5L0 11Z" fill="#555"/></svg>
<svg class="a" style="left:3065px;top:467px;" width="11" height="6" viewBox="0 0 11 6"><path d="M0 3H8M5.5 0.8L8.2 3L5.5 5.2M9.5 0V6" stroke="#555" stroke-width="1.6" fill="none"/></svg>
<svg class="a" style="left:3122.5px;top:465px;" width="6" height="6" viewBox="0 0 6 6"><path d="M1 0V4.8H6" stroke="#555" stroke-width="1.8" fill="none"/></svg>
<svg class="a" style="left:3170.5px;top:465px;" width="6" height="6" viewBox="0 0 6 6"><path d="M1 0V4.8H6" stroke="#555" stroke-width="1.8" fill="none"/></svg>
<svg class="a" style="left:3218.5px;top:465px;" width="6" height="6" viewBox="0 0 6 6"><path d="M1 0V4.8H6" stroke="#555" stroke-width="1.8" fill="none"/></svg>
<div class="a" style="left:2155px;top:477px;width:1070px;height:128px;background:#fff;"></div>
<div class="a" style="left:2156px;top:478px;width:1069px;height:127px;background:#d9d9d9;border-left:1px solid #000;border-top:1px solid #000;box-sizing:border-box;"></div>
<svg class="a" style="left:2150px;top:366px;" width="20" height="26" viewBox="0 0 20 26"><defs><linearGradient id="pg" x1="0" y1="0" x2="1" y2="1"><stop offset="0" stop-color="#fff"/><stop offset="1" stop-color="#e6e6e6"/></linearGradient></defs><path d="M0.75 0.75H12L19.25 8V25.25H0.75Z" fill="url(#pg)" stroke="#474b50" stroke-width="1.5"/><path d="M12 0.75V8H19.25Z" fill="#474b50"/><path d="M3.5 1V25M16.5 8V25M1 3.5H13M1 23H19" stroke="#1e5ec4" stroke-width="1.2"/></svg>
<div class="t" style="left:2139.40px;top:398.65px;font-size:11px;color:#333;font-family:'Liberation Sans', sans-serif;transform:scaleX(1.0530);transform-origin:0 0;">Margins</div>
<div class="t" style="left:2134.00px;top:411.55px;font-size:11px;color:#333;font-family:'Liberation Sans', sans-serif;transform:scaleX(1.0234);transform-origin:0 0;">and Paper</div>
<svg class="a" style="left:2209px;top:366px;" width="24" height="26" viewBox="0 0 24 26"><rect x="0.75" y="0.75" width="14.5" height="19.5" fill="#fff" stroke="#474b50" stroke-width="1.5"/><path d="M2.5 3.5H8M2.5 5.5H13M2.5 7.5H13M2.5 9.5H13" stroke="#999" stroke-width="0.9"/><rect x="4.75" y="11.75" width="18.5" height="13.5" fill="#fff" stroke="#474b50" stroke-width="1.5"/><path d="M6.5 14.5H12M6.5 17H21.5M6.5 19.5H21.5M6.5 22H21.5" stroke="#999" stroke-width="0.9"/><path d="M17 2.5H21V7" stroke="#1e5ec4" stroke-width="1.3" fill="none"/><path d="M18.3 6.5H23.7L21 9.5Z" fill="#1e5ec4"/></svg>
<div class="t" style="left:2191.50px;top:398.65px;font-size:11px;color:#333;font-family:'Liberation Sans', sans-serif;transform:scaleX(1.0958);transform-origin:0 0;">Orientation</div>
<svg class="a" style="left:2218px;top:416px;" width="5" height="3" viewBox="0 0 5 3"><path d="M0 0H5L2.5 3Z" fill="#333"/></svg>
<div class="a" style="left:2254px;top:360px;width:50px;height:66px;background:#cce4f7;border:1px solid #6aaae8;box-sizing:border-box;"></div>
<svg class="a" style="left:2269px;top:366px;" width="20" height="26" viewBox="0 0 20 26"><rect x="0.75" y="0.75" width="18.5" height="24.5" fill="#fff" stroke="#474b50" stroke-width="1.5"/><rect x="2.5" y="3.5" width="15" height="19" fill="#b0b0b0"/><path d="M4 4.5H9M11 4.5H16M4 6.5H9M11 6.5H16M4 8.5H9M11 8.5H16M4 10.5H9M11 10.5H16M4 12.5H9M11 12.5H16M4 14.5H9M11 14.5H16M4 16.5H9M11 16.5H16M4 18.5H9M11 18.5H16M4 20.5H9M11 20.5H16M4 22.5H9M11 22.5H16" stroke="#1e5ec4" stroke-width="1.1"/></svg>
<div class="t" style="left:2256.75px;top:398.65px;font-size:11px;color:#333;font-family:'Liberation Sans', sans-serif;">Columns</div>
<svg class="a" style="left:2276px;top:416px;" width="5" height="3" viewBox="0 0 5 3"><path d="M0 0H5L2.5 3Z" fill="#333"/></svg>
<svg class="a" style="left:2312px;top:364px;" width="24" height="30" viewBox="0 0 24 30"><path d="M4.75 0V7.75H23.25V0" fill="#fff" stroke="#474b50" stroke-width="1.5"/><path d="M7 1.5H21M7 3.5H21M7 5.5H21" stroke="#888" stroke-width="0.8"/><path d="M4.75 30V14.75H23.25V30" fill="#fff" stroke="#474b50" stroke-width="1.5"/><path d="M7 17.5H21M7 19.5H21M7 21.5H21M7 23.5H21M7 25.5H21M7 27.5H21" stroke="#888" stroke-width="0.8"/><path d="M0.5 7L6 11L0.5 15Z" fill="#1e5ec4"/></svg>
<div class="t" style="left:2307.45px;top:398.65px;font-size:11px;color:#333;font-family:'Liberation Sans', sans-serif;transform:scaleX(0.9664);transform-origin:0 0;">Breaks</div>
<svg class="a" style="left:2322px;top:416px;" width="5" height="3" viewBox="0 0 5 3"><path d="M0 0H5L2.5 3Z" fill="#333"/></svg>
<svg class="a" style="left:2358px;top:366px;" width="20" height="26" viewBox="0 0 20 26"><defs><linearGradient id="pg" x1="0" y1="0" x2="1" y2="1"><stop offset="0" stop-color="#fff"/><stop offset="1" stop-color="#e6e6e6"/></linearGradient></defs><path d="M0.75 0.75H12L19.25 8V25.25H0.75Z" fill="url(#pg)" stroke="#474b50" stroke-width="1.5"/><path d="M12 0.75V8H19.25Z" fill="#474b50"/><path d="M2.5 2.5H12.5M2.5 2.5V23.5H17.5V9" stroke="#1e5ec4" stroke-width="1.2" fill="none"/></svg>
<div class="t" style="left:2355.85px;top:398.65px;font-size:11px;color:#333;font-family:'Liberation Sans', sans-serif;transform:scaleX(0.9448);transform-origin:0 0;">Page</div>
<div class="t" style="left:2348.00px;top:411.55px;font-size:11px;color:#333;font-family:'Liberation Sans', sans-serif;transform:scaleX(1.0277);transform-origin:0 0;">Borders</div>
<div class="a" style="left:2397px;top:359px;width:1px;height:84px;background:#e1e2e4;"></div>
<div class="t" style="left:2232.22px;top:431.75px;font-size:11px;color:#4a4a4a;font-family:'Liberation Sans', sans-serif;">Page Setup</div>
<div class="a" style="left:3013px;top:515px;width:212px;height:90px;background:#e8e8e8;"></div>
<div class="a" style="left:3014px;top:516px;width:211px;height:89px;background:#fff;border-left:1px solid #000;border-top:1px solid #000;box-sizing:border-box;"></div>
<div class="t" style="left:3075.20px;top:554.36px;font-size:12.5px;color:#555;font-family:'Liberation Serif', serif;transform:scaleX(0.9483);transform-origin:0 0;">ArCADia-ARCHITECTURE</div>
<div class="t" style="left:3075.20px;top:568.36px;font-size:12.5px;color:#555;font-family:'Liberation Serif', serif;transform:scaleX(0.9483);transform-origin:0 0;">Author: Internal License - ArCADia</div>
<div class="a" style="left:3075px;top:597px;width:150px;height:1px;background:#000;"></div>
<div class="a" style="left:2257px;top:429px;width:218px;height:200px;background:rgba(0,0,0,0.35);filter:blur(1.5px);"></div>
<div class="a" style="left:2254px;top:426px;width:218px;height:200px;background:#f9fafc;border:1px solid #d9dadc;border-radius:2px;box-sizing:border-box;"></div>
<svg class="a" style="left:2268px;top:437px;" width="20" height="26" viewBox="0 0 20 26"><rect x="0.75" y="0.75" width="18.5" height="24.5" fill="#fff" stroke="#474b50" stroke-width="1.5"/><rect x="2.5" y="3.5" width="15" height="19" fill="#b8b8b8"/><path d="M4 4.5H16M4 6.5H16M4 8.5H16M4 10.5H16M4 12.5H16M4 14.5H16M4 16.5H16M4 18.5H16M4 20.5H16M4 22.5H16" stroke="#1e5ec4" stroke-width="1.1"/></svg>
<div class="t" style="left:2301.00px;top:434.05px;font-size:11px;color:#333;font-family:'Liberation Sans', sans-serif;font-weight:bold;transform:scaleX(0.9810);transform-origin:0 0;">One</div>
<div class="t" style="left:2301.00px;top:451.05px;font-size:11px;color:#444;font-family:'Liberation Sans', sans-serif;transform:scaleX(1.0464);transform-origin:0 0;">One column</div>
<svg class="a" style="left:2268px;top:490px;" width="20" height="26" viewBox="0 0 20 26"><rect x="0.75" y="0.75" width="18.5" height="24.5" fill="#fff" stroke="#474b50" stroke-width="1.5"/><rect x="2.5" y="3.5" width="15" height="19" fill="#b8b8b8"/><path d="M4 4.5H9M11 4.5H16M4 6.5H9M11 6.5H16M4 8.5H9M11 8.5H16M4 10.5H9M11 10.5H16M4 12.5H9M11 12.5H16M4 14.5H9M11 14.5H16M4 16.5H9M11 16.5H16M4 18.5H9M11 18.5H16M4 20.5H9M11 20.5H16M4 22.5H9M11 22.5H16" stroke="#1e5ec4" stroke-width="1.1"/></svg>
<div class="t" style="left:2301.00px;top:486.85px;font-size:11px;color:#333;font-family:'Liberation Sans', sans-serif;font-weight:bold;transform:scaleX(1.0242);transform-origin:0 0;">Two</div>
<div class="t" style="left:2301.00px;top:503.55px;font-size:11px;color:#444;font-family:'Liberation Sans', sans-serif;transform:scaleX(1.0202);transform-origin:0 0;">Two columns</div>
<svg class="a" style="left:2268px;top:543.4px;" width="20" height="26" viewBox="0 0 20 26"><rect x="0.75" y="0.75" width="18.5" height="24.5" fill="#fff" stroke="#474b50" stroke-width="1.5"/><rect x="2.5" y="3.5" width="15" height="19" fill="#b8b8b8"/><path d="M4 4.5H6M9 4.5H11M14 4.5H16M4 6.5H6M9 6.5H11M14 6.5H16M4 8.5H6M9 8.5H11M14 8.5H16M4 10.5H6M9 10.5H11M14 10.5H16M4 12.5H6M9 12.5H11M14 12.5H16M4 14.5H6M9 14.5H11M14 14.5H16M4 16.5H6M9 16.5H11M14 16.5H16M4 18.5H6M9 18.5H11M14 18.5H16M4 20.5H6M9 20.5H11M14 20.5H16M4 22.5H6M9 22.5H11M14 22.5H16" stroke="#1e5ec4" stroke-width="1.1"/></svg>
<div class="t" style="left:2301.00px;top:539.75px;font-size:11px;color:#333;font-family:'Liberation Sans', sans-serif;font-weight:bold;transform:scaleX(0.9610);transform-origin:0 0;">Three</div>
<div class="t" style="left:2301.00px;top:557.04px;font-size:11px;color:#444;font-family:'Liberation Sans', sans-serif;transform:scaleX(0.9755);transform-origin:0 0;">Three columns</div>
<div class="a" style="left:2300px;top:587px;width:170px;height:1px;background:#d4d4d4;"></div>
<svg class="a" style="left:2268px;top:598px;" width="20" height="26" viewBox="0 0 20 26"><rect x="0.75" y="0.75" width="18.5" height="24.5" fill="#fff" stroke="#474b50" stroke-width="1.5"/><rect x="2.5" y="3.5" width="15" height="19" fill="#b8b8b8"/><path d="M4 5H9M11 5H16" stroke="#1e5ec4" stroke-width="1.1"/></svg>
<div class="t" style="left:2301.00px;top:595.54px;font-size:11px;color:#333;font-family:'Liberation Sans', sans-serif;font-weight:bold;">More</div>
</body></html>
